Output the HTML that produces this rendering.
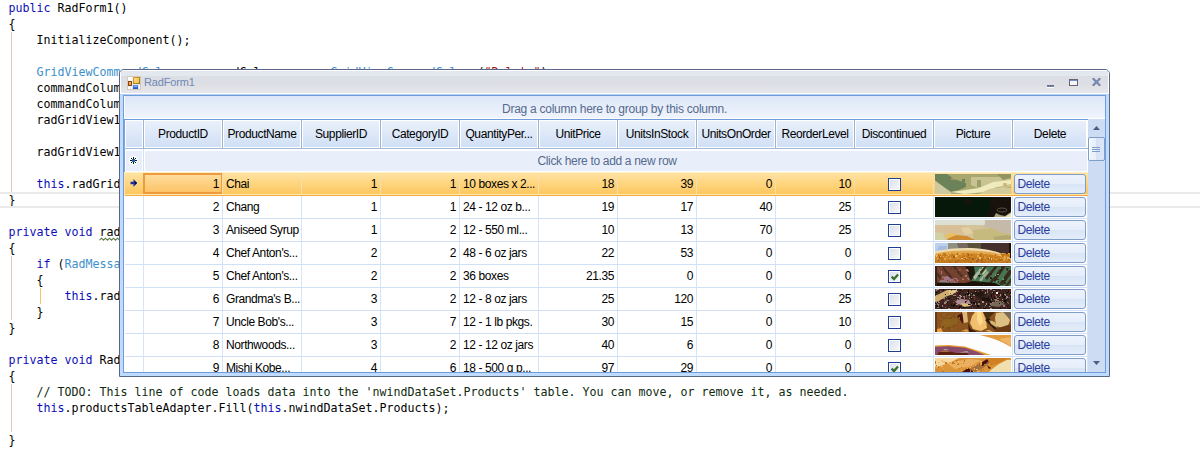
<!DOCTYPE html>
<html><head><meta charset="utf-8"><title>RadForm1</title>
<style>
html,body{margin:0;padding:0;background:#fff;}
body{width:1200px;height:463px;overflow:hidden;position:relative;font-family:"Liberation Sans",sans-serif;font-size:12px;}
#code{position:absolute;left:8.6px;top:0;font-family:"DejaVu Sans Mono","Liberation Mono",monospace;font-size:11.63px;line-height:16px;color:#000;white-space:pre;margin:0;}
#code .k{color:#0d0db8;} #code .t{color:#3d8fcb;} #code .c{color:#0f2a0f;} #code .s{color:#a31515;}
#code .sq{}
.guide{position:absolute;width:1px;background:#dccabe;}
.curline{position:absolute;left:0;top:192px;width:1200px;height:12px;border-top:2px solid #eaeaea;border-bottom:2px solid #eaeaea;}
#win{position:absolute;left:119px;top:69px;width:991px;height:308px;box-sizing:border-box;border:1px solid #5b6788;border-radius:5px 5px 0 0;background:#bfdbff;overflow:hidden;}
#win div,#win span,#win svg{position:absolute;box-sizing:border-box;}
#title{left:0;top:0;width:989px;height:24px;background:linear-gradient(#fff 0,#fff 1px,#e3e8ee 1px,#e3e8ee 6px,#dbdee5 6px,#dddfe5 14px,#e5e7eb 23px,#fff 23px);border-left:1px solid #fff;border-right:1px solid #fff;}
#title .txt{left:23px;top:6px;font-size:11px;color:#7088b4;white-space:pre;letter-spacing:-0.15px;}
.lbl{white-space:pre;letter-spacing:-0.4px;line-height:14px;height:14px;color:#000;}
</style></head><body>
<pre id="code"><span class="k">public</span> RadForm1()
{
    InitializeComponent();

    <span class="t">GridViewCommandColumn</span> commandColumn = <span class="k">new</span> <span class="t">GridViewCommandColumn</span>(<span class="s">"Delete"</span>);
    commandColumn.Name = <span class="s">"Delete"</span>;
    commandColumn.UseDefaultText = <span class="k">true</span>;
    radGridView1.Columns.Add(commandColumn);

    radGridView1.CommandCellClick += radGridView1_CommandCellClick;

    <span class="k">this</span>.radGridView1.UserDeletingRow += radGridView1_UserDeletingRow;
}

<span class="k">private</span> <span class="k">void</span> <span class="sq">radGridView1_CommandCellClick</span>(<span class="k">object</span> sender, <span class="t">EventArgs</span> e)
{
    <span class="k">if</span> (<span class="t">RadMessageBox</span>.Show(<span class="s">"Are you sure?"</span>) == <span class="t">DialogResult</span>.OK)
    {
        <span class="k">this</span>.radGridView1.Rows.Remove(row);
    }
}

<span class="k">private</span> <span class="k">void</span> RadForm1_Load(<span class="k">object</span> sender, <span class="t">EventArgs</span> e)
{
    <span class="c">// TODO: This line of code loads data into the 'nwindDataSet.Products' table. You can move, or remove it, as needed.</span>
    <span class="k">this</span>.productsTableAdapter.Fill(<span class="k">this</span>.nwindDataSet.Products);

}
</pre>
<div class="guide" style="left:11px;top:32px;height:160px"></div>
<div class="guide" style="left:11px;top:256px;height:64px"></div>
<div class="guide" style="left:40px;top:288px;height:16px;background:#f2c468"></div>
<div class="guide" style="left:11px;top:384px;height:48px"></div>
<svg style="position:absolute;left:99px;top:236px" width="24" height="6" viewBox="0 0 24 6"><path d="M0.500 4.200l2-2 2 2 2-2 2 2 2-2 2 2 2-2 2 2 2-2 2 2 2-2" fill="none" stroke="#5f7848" stroke-width="1.100"/></svg>
<div class="curline"></div>
<div id="win">
<div id="title"><span class="txt">RadForm1</span></div>

<div style="left:927px;top:15px;width:7px;height:2px;background:linear-gradient(#6b6470,#6f8fc6);"></div>
<div style="left:927px;top:17px;width:7px;height:1px;background:#fff;"></div>
<div style="left:949px;top:9px;width:9px;height:7px;border:1px solid #6b6470;background:linear-gradient(#6f8fc6 0,#6f8fc6 1px,#f4f6fa 1px);"></div>
<svg style="left:972px;top:8px" width="9" height="8" viewBox="0 0 9 8"><path d="M0.8 0.3L8.2 7.7M8.2 0.3L0.8 7.7" stroke="#7a6a6a" stroke-width="1.9"/><path d="M1.4 0.9L7.6 7.1M7.6 0.9L1.4 7.1" stroke="#6f8ec4" stroke-width="1.5"/></svg>
<svg style="left:7px;top:6px" width="14" height="14" viewBox="0 0 14 14">
<defs><linearGradient id="ig1" x1="0" y1="0" x2="1" y2="1"><stop offset="0" stop-color="#e09a28"/><stop offset="1" stop-color="#8a7a14"/></linearGradient>
<linearGradient id="ig2" x1="0" y1="0" x2="0" y2="1"><stop offset="0" stop-color="#5a9af4"/><stop offset="1" stop-color="#1a50c4"/></linearGradient>
<linearGradient id="ig3" x1="0" y1="0" x2="1" y2="1"><stop offset="0" stop-color="#fde08c"/><stop offset="1" stop-color="#f6b848"/></linearGradient></defs>
<rect x="0.5" y="0.5" width="13" height="13" fill="#e6e6ea" stroke="#d6c8ba"/>
<rect x="1" y="1" width="4.500" height="3.500" fill="#fbfbfd"/><rect x="1" y="10.500" width="2" height="2.500" fill="#fbfbfd"/><rect x="3.800" y="10.500" width="1.200" height="2.500" fill="#fbfbfd"/><rect x="12" y="9" width="1" height="4" fill="#fbfbfd"/>
<rect x="1.500" y="5.500" width="3" height="4" fill="#e8983c" stroke="#8a4810"/><rect x="2.600" y="6.300" width="1" height="1.600" fill="#f8c888"/>
<rect x="6.500" y="1.500" width="6" height="6" fill="url(#ig3)" stroke="url(#ig1)"/>
<rect x="6" y="9" width="5" height="4" fill="url(#ig2)"/><path d="M7 10.800l1-.8 1 .5 1-.3v.8h-3z" fill="#a8d0fa"/>
</svg>

<div style="left:0px;top:24px;width:989px;height:1px;background:#b5d0f4;"></div>
<div style="left:3px;top:25px;width:983px;height:278px;background:#fff;border:1px solid #6f9dd9;"></div>
<div style="left:4px;top:26px;width:981px;height:23px;background:linear-gradient(#dce7f8,#f0f4fc);border-left:1px solid #fff;border-bottom:1px solid #fff;"></div>
<span class="lbl" style="left:4px;top:32px;width:981px;text-align:center;color:#566a8f;letter-spacing:-0.26px;">Drag a column here to group by this column.</span>
<div style="left:4px;top:49px;width:964px;height:1px;background:#6f9dd9;"></div>
<div style="left:4px;top:50px;width:964px;height:28px;background:#fff;"></div>
<div style="left:4px;top:50px;width:1px;height:28px;background:#7fa4d8;"></div>
<div style="left:5px;top:50px;width:18px;height:28px;background:linear-gradient(#e9f0fa,#d1e0f6);border:1px solid #fff;"></div>
<div style="left:23px;top:50px;width:1px;height:28px;background:#9cb4d4;"></div>
<div style="left:24px;top:50px;width:78px;height:28px;background:linear-gradient(#e9f0fa,#d1e0f6);border:1px solid #fff;"></div>
<span class="lbl" style="left:24px;top:57px;width:78px;text-align:center;">ProductID</span>
<div style="left:102px;top:50px;width:1px;height:28px;background:#9cb4d4;"></div>
<div style="left:103px;top:50px;width:78px;height:28px;background:linear-gradient(#e9f0fa,#d1e0f6);border:1px solid #fff;"></div>
<span class="lbl" style="left:103px;top:57px;width:78px;text-align:center;">ProductName</span>
<div style="left:181px;top:50px;width:1px;height:28px;background:#9cb4d4;"></div>
<div style="left:182px;top:50px;width:78px;height:28px;background:linear-gradient(#e9f0fa,#d1e0f6);border:1px solid #fff;"></div>
<span class="lbl" style="left:182px;top:57px;width:78px;text-align:center;">SupplierID</span>
<div style="left:260px;top:50px;width:1px;height:28px;background:#9cb4d4;"></div>
<div style="left:261px;top:50px;width:78px;height:28px;background:linear-gradient(#e9f0fa,#d1e0f6);border:1px solid #fff;"></div>
<span class="lbl" style="left:261px;top:57px;width:78px;text-align:center;">CategoryID</span>
<div style="left:339px;top:50px;width:1px;height:28px;background:#9cb4d4;"></div>
<div style="left:340px;top:50px;width:78px;height:28px;background:linear-gradient(#e9f0fa,#d1e0f6);border:1px solid #fff;"></div>
<span class="lbl" style="left:340px;top:57px;width:78px;text-align:center;">QuantityPer...</span>
<div style="left:418px;top:50px;width:1px;height:28px;background:#9cb4d4;"></div>
<div style="left:419px;top:50px;width:78px;height:28px;background:linear-gradient(#e9f0fa,#d1e0f6);border:1px solid #fff;"></div>
<span class="lbl" style="left:419px;top:57px;width:78px;text-align:center;">UnitPrice</span>
<div style="left:497px;top:50px;width:1px;height:28px;background:#9cb4d4;"></div>
<div style="left:498px;top:50px;width:78px;height:28px;background:linear-gradient(#e9f0fa,#d1e0f6);border:1px solid #fff;"></div>
<span class="lbl" style="left:498px;top:57px;width:78px;text-align:center;">UnitsInStock</span>
<div style="left:576px;top:50px;width:1px;height:28px;background:#9cb4d4;"></div>
<div style="left:577px;top:50px;width:78px;height:28px;background:linear-gradient(#e9f0fa,#d1e0f6);border:1px solid #fff;"></div>
<span class="lbl" style="left:577px;top:57px;width:78px;text-align:center;">UnitsOnOrder</span>
<div style="left:655px;top:50px;width:1px;height:28px;background:#9cb4d4;"></div>
<div style="left:656px;top:50px;width:78px;height:28px;background:linear-gradient(#e9f0fa,#d1e0f6);border:1px solid #fff;"></div>
<span class="lbl" style="left:656px;top:57px;width:78px;text-align:center;">ReorderLevel</span>
<div style="left:734px;top:50px;width:1px;height:28px;background:#9cb4d4;"></div>
<div style="left:735px;top:50px;width:78px;height:28px;background:linear-gradient(#e9f0fa,#d1e0f6);border:1px solid #fff;"></div>
<span class="lbl" style="left:735px;top:57px;width:78px;text-align:center;">Discontinued</span>
<div style="left:813px;top:50px;width:1px;height:28px;background:#9cb4d4;"></div>
<div style="left:814px;top:50px;width:78px;height:28px;background:linear-gradient(#e9f0fa,#d1e0f6);border:1px solid #fff;"></div>
<span class="lbl" style="left:814px;top:57px;width:78px;text-align:center;">Picture</span>
<div style="left:892px;top:50px;width:1px;height:28px;background:#9cb4d4;"></div>
<div style="left:893px;top:50px;width:74px;height:28px;background:linear-gradient(#e9f0fa,#d1e0f6);border:1px solid #fff;"></div>
<span class="lbl" style="left:893px;top:57px;width:74px;text-align:center;">Delete</span>
<div style="left:4px;top:78px;width:964px;height:1px;background:#a3b9d8;"></div>
<div style="left:4px;top:79px;width:964px;height:23px;background:#fff;"></div>
<div style="left:4px;top:79px;width:1px;height:23px;background:#7fa4d8;"></div>
<div style="left:6px;top:81px;width:16px;height:20px;background:#e9effa;"></div>
<div style="left:23px;top:79px;width:1px;height:22px;background:#d3e1f5;"></div>
<div style="left:25px;top:81px;width:942px;height:20px;background:#e9effa;"></div>
<span class="lbl" style="left:387px;top:84px;width:200px;text-align:center;color:#566a8f;letter-spacing:-0.33px;">Click here to add a new row</span>
<svg style="left:8px;top:85px" width="11" height="11" viewBox="-2 -2 11 11"><circle cx="3.5" cy="3.5" r="4.6" fill="#fff" opacity="0.8"/><g shape-rendering="crispEdges"><path d="M3 0h1v2h-1zM3 5h1v2h-1zM0 3h2v1h-2zM5 3h2v1h-2zM1 1h1v1h-1zM5 1h1v1h-1zM1 5h1v1h-1zM5 5h1v1h-1z" fill="#0a1a10"/><rect x="2" y="2" width="3" height="3" fill="#1a62b4"/></g></svg>
<div style="left:4px;top:102px;width:964px;height:1px;background:#d0e1f7;"></div>
<div style="left:4px;top:103px;width:964px;height:21px;background:linear-gradient(#ffe3a3,#fed57f 50%,#fcc75f);"></div>
<div style="left:4px;top:102px;width:964px;height:1px;background:#fff0c4;"></div>
<div style="left:4px;top:124px;width:964px;height:1px;background:#ffe9a6;"></div>
<div style="left:4px;top:125px;width:964px;height:1px;background:#f5a742;"></div>
<div style="left:23px;top:103px;width:80px;height:21px;border:2px solid #ef9a3e;background:linear-gradient(#fedc9c,#fcc468);"></div>
<div style="left:102px;top:103px;width:1px;height:21px;background:#f7dcae;"></div>
<div style="left:181px;top:103px;width:1px;height:21px;background:#f7dcae;"></div>
<div style="left:260px;top:103px;width:1px;height:21px;background:#f7dcae;"></div>
<div style="left:339px;top:103px;width:1px;height:21px;background:#f7dcae;"></div>
<div style="left:418px;top:103px;width:1px;height:21px;background:#f7dcae;"></div>
<div style="left:497px;top:103px;width:1px;height:21px;background:#f7dcae;"></div>
<div style="left:576px;top:103px;width:1px;height:21px;background:#f7dcae;"></div>
<div style="left:655px;top:103px;width:1px;height:21px;background:#f7dcae;"></div>
<div style="left:734px;top:103px;width:1px;height:21px;background:#f7dcae;"></div>
<div style="left:813px;top:103px;width:1px;height:21px;background:#f7dcae;"></div>
<div style="left:892px;top:103px;width:1px;height:21px;background:#f7dcae;"></div>
<svg style="left:10px;top:108px" width="8" height="10" viewBox="0 0 8 10"><path d="M0.5 3.7h3V1l3.7 4L3.5 9V6.3h-3z" fill="#1c2fa0"/><path d="M5.2 3.4l1.9 1.6-1.9 1.6z" fill="#000"/></svg>
<div style="left:4px;top:103px;width:1px;height:23px;background:#fde3ad;"></div>
<span class="lbl" style="left:24px;top:107px;width:75px;text-align:right;">1</span>
<span class="lbl" style="left:106px;top:107px;width:75px;text-align:left;">Chai</span>
<span class="lbl" style="left:182px;top:107px;width:75px;text-align:right;">1</span>
<span class="lbl" style="left:261px;top:107px;width:75px;text-align:right;">1</span>
<span class="lbl" style="left:343px;top:107px;width:75px;text-align:left;">10 boxes x 2...</span>
<span class="lbl" style="left:419px;top:107px;width:75px;text-align:right;">18</span>
<span class="lbl" style="left:498px;top:107px;width:75px;text-align:right;">39</span>
<span class="lbl" style="left:577px;top:107px;width:75px;text-align:right;">0</span>
<span class="lbl" style="left:656px;top:107px;width:75px;text-align:right;">10</span>
<div style="left:768px;top:108px;width:13px;height:13px;border:1px solid #1f3f96;background:#fff;"><div style="left:1px;top:1px;width:9px;height:9px;background:linear-gradient(135deg,#dde1e9,#f6f7fa)"></div></div>
<svg style="left:815px;top:104px" width="76" height="20" viewBox="0 0 76 20" preserveAspectRatio="none"><rect width="76" height="20" fill="#a9a770"/><path d="M36 3h40v10L44 14l-8-3z" fill="#c8c390"/><path d="M0 0h12l7 5 12 4v4l-7 3-9 2L0 6z" fill="#6c8359"/><path d="M0 7l16 11v2H0z" fill="#cfc9a0"/><path d="M16 18l28-4 14-6 18-2v4l-14 3-12 5-20 2z" fill="#f0ebbf"/><path d="M44 20l10-5 14-2 8 1v6z" fill="#d4cc98"/><path d="M62 0h14v4l-8 2z" fill="#8f9462"/><path d="M42 6h4v7h-4z" fill="#9da066"/><path d="M16 4h4v2h-4z" fill="#b89c58" opacity=".7"/><path d="M68 9h4v3h-4z" fill="#c8aa60" opacity=".7"/><path d="M27 5h3v3h-3z" fill="#6c8359"/></svg>
<div style="left:894px;top:104px;width:72px;height:20px;border:1px solid #809cc8;border-radius:3px;background:linear-gradient(#edf3fc,#e6eefa 48%,#d9e5f6 52%,#e4edfa);"></div>
<span class="lbl" style="left:897.5px;top:107px;width:60px;color:#2a3d9c;">Delete</span>
<div style="left:4px;top:148px;width:964px;height:1px;background:#d0e1f7;"></div>
<div style="left:23px;top:126px;width:1px;height:22px;background:#d6e4f7;"></div>
<div style="left:102px;top:126px;width:1px;height:22px;background:#d6e4f7;"></div>
<div style="left:181px;top:126px;width:1px;height:22px;background:#d6e4f7;"></div>
<div style="left:260px;top:126px;width:1px;height:22px;background:#d6e4f7;"></div>
<div style="left:339px;top:126px;width:1px;height:22px;background:#d6e4f7;"></div>
<div style="left:418px;top:126px;width:1px;height:22px;background:#d6e4f7;"></div>
<div style="left:497px;top:126px;width:1px;height:22px;background:#d6e4f7;"></div>
<div style="left:576px;top:126px;width:1px;height:22px;background:#d6e4f7;"></div>
<div style="left:655px;top:126px;width:1px;height:22px;background:#d6e4f7;"></div>
<div style="left:734px;top:126px;width:1px;height:22px;background:#d6e4f7;"></div>
<div style="left:813px;top:126px;width:1px;height:22px;background:#d6e4f7;"></div>
<div style="left:892px;top:126px;width:1px;height:22px;background:#d6e4f7;"></div>
<div style="left:967px;top:126px;width:1px;height:22px;background:#d6e4f7;"></div>
<div style="left:4px;top:126px;width:1px;height:23px;background:#fff;"></div>
<span class="lbl" style="left:24px;top:130px;width:75px;text-align:right;">2</span>
<span class="lbl" style="left:106px;top:130px;width:75px;text-align:left;">Chang</span>
<span class="lbl" style="left:182px;top:130px;width:75px;text-align:right;">1</span>
<span class="lbl" style="left:261px;top:130px;width:75px;text-align:right;">1</span>
<span class="lbl" style="left:343px;top:130px;width:75px;text-align:left;">24 - 12 oz b...</span>
<span class="lbl" style="left:419px;top:130px;width:75px;text-align:right;">19</span>
<span class="lbl" style="left:498px;top:130px;width:75px;text-align:right;">17</span>
<span class="lbl" style="left:577px;top:130px;width:75px;text-align:right;">40</span>
<span class="lbl" style="left:656px;top:130px;width:75px;text-align:right;">25</span>
<div style="left:768px;top:131px;width:13px;height:13px;border:1px solid #1f3f96;background:#fff;"><div style="left:1px;top:1px;width:9px;height:9px;background:linear-gradient(135deg,#dde1e9,#f6f7fa)"></div></div>
<svg style="left:815px;top:127px" width="76" height="20" viewBox="0 0 76 20" preserveAspectRatio="none"><rect width="76" height="20" fill="#05180a"/><path d="M56 0h20v20H50l4-6z" fill="#17130c"/><path d="M28 2h8v6h-6z" fill="#15130b"/><ellipse cx="67" cy="13" rx="5" ry="2" fill="none" stroke="#5c4c42" stroke-width="1"/><path d="M59 20l2-4 4 2 5 1 6-4v5z" fill="#a89c78"/><path d="M70 20l6-4v4z" fill="#e6dfb4"/></svg>
<div style="left:894px;top:127px;width:72px;height:20px;border:1px solid #809cc8;border-radius:3px;background:linear-gradient(#edf3fc,#e6eefa 48%,#d9e5f6 52%,#e4edfa);"></div>
<span class="lbl" style="left:897.5px;top:130px;width:60px;color:#2a3d9c;">Delete</span>
<div style="left:4px;top:171px;width:964px;height:1px;background:#d0e1f7;"></div>
<div style="left:23px;top:149px;width:1px;height:22px;background:#d6e4f7;"></div>
<div style="left:102px;top:149px;width:1px;height:22px;background:#d6e4f7;"></div>
<div style="left:181px;top:149px;width:1px;height:22px;background:#d6e4f7;"></div>
<div style="left:260px;top:149px;width:1px;height:22px;background:#d6e4f7;"></div>
<div style="left:339px;top:149px;width:1px;height:22px;background:#d6e4f7;"></div>
<div style="left:418px;top:149px;width:1px;height:22px;background:#d6e4f7;"></div>
<div style="left:497px;top:149px;width:1px;height:22px;background:#d6e4f7;"></div>
<div style="left:576px;top:149px;width:1px;height:22px;background:#d6e4f7;"></div>
<div style="left:655px;top:149px;width:1px;height:22px;background:#d6e4f7;"></div>
<div style="left:734px;top:149px;width:1px;height:22px;background:#d6e4f7;"></div>
<div style="left:813px;top:149px;width:1px;height:22px;background:#d6e4f7;"></div>
<div style="left:892px;top:149px;width:1px;height:22px;background:#d6e4f7;"></div>
<div style="left:967px;top:149px;width:1px;height:22px;background:#d6e4f7;"></div>
<div style="left:4px;top:149px;width:1px;height:23px;background:#fff;"></div>
<span class="lbl" style="left:24px;top:153px;width:75px;text-align:right;">3</span>
<span class="lbl" style="left:106px;top:153px;width:75px;text-align:left;">Aniseed Syrup</span>
<span class="lbl" style="left:182px;top:153px;width:75px;text-align:right;">1</span>
<span class="lbl" style="left:261px;top:153px;width:75px;text-align:right;">2</span>
<span class="lbl" style="left:343px;top:153px;width:75px;text-align:left;">12 - 550 ml...</span>
<span class="lbl" style="left:419px;top:153px;width:75px;text-align:right;">10</span>
<span class="lbl" style="left:498px;top:153px;width:75px;text-align:right;">13</span>
<span class="lbl" style="left:577px;top:153px;width:75px;text-align:right;">70</span>
<span class="lbl" style="left:656px;top:153px;width:75px;text-align:right;">25</span>
<div style="left:768px;top:154px;width:13px;height:13px;border:1px solid #1f3f96;background:#fff;"><div style="left:1px;top:1px;width:9px;height:9px;background:linear-gradient(135deg,#dde1e9,#f6f7fa)"></div></div>
<svg style="left:815px;top:150px" width="76" height="20" viewBox="0 0 76 20" preserveAspectRatio="none"><rect width="76" height="20" fill="#d4c49a"/><rect width="76" height="5" fill="#dcdfd3"/><path d="M50 0h26v14l-8-1-12-5-8-1 2-3z" fill="#c5b9aa"/><path d="M38 10l18-2 12 5 8 1v6H38z" fill="#c6ba7e"/><path d="M0 6l24-1 10 2 4 4-6 4-20-2-12 1z" fill="#d9bf98"/><path d="M0 12l8 1 2 7H0z" fill="#cfd0a4"/><path d="M26 8l8-1 4 6-8 2z" fill="#e3cfa2"/><path d="M12 20l2-3 6-2 12 1 8 4z" fill="#cf8a34"/><path d="M8 16l8-3 8 1-10 4z" fill="#e8c060"/><path d="M58 17l14-2 4 1v3l-16 1z" fill="#b0a870"/></svg>
<div style="left:894px;top:150px;width:72px;height:20px;border:1px solid #809cc8;border-radius:3px;background:linear-gradient(#edf3fc,#e6eefa 48%,#d9e5f6 52%,#e4edfa);"></div>
<span class="lbl" style="left:897.5px;top:153px;width:60px;color:#2a3d9c;">Delete</span>
<div style="left:4px;top:194px;width:964px;height:1px;background:#d0e1f7;"></div>
<div style="left:23px;top:172px;width:1px;height:22px;background:#d6e4f7;"></div>
<div style="left:102px;top:172px;width:1px;height:22px;background:#d6e4f7;"></div>
<div style="left:181px;top:172px;width:1px;height:22px;background:#d6e4f7;"></div>
<div style="left:260px;top:172px;width:1px;height:22px;background:#d6e4f7;"></div>
<div style="left:339px;top:172px;width:1px;height:22px;background:#d6e4f7;"></div>
<div style="left:418px;top:172px;width:1px;height:22px;background:#d6e4f7;"></div>
<div style="left:497px;top:172px;width:1px;height:22px;background:#d6e4f7;"></div>
<div style="left:576px;top:172px;width:1px;height:22px;background:#d6e4f7;"></div>
<div style="left:655px;top:172px;width:1px;height:22px;background:#d6e4f7;"></div>
<div style="left:734px;top:172px;width:1px;height:22px;background:#d6e4f7;"></div>
<div style="left:813px;top:172px;width:1px;height:22px;background:#d6e4f7;"></div>
<div style="left:892px;top:172px;width:1px;height:22px;background:#d6e4f7;"></div>
<div style="left:967px;top:172px;width:1px;height:22px;background:#d6e4f7;"></div>
<div style="left:4px;top:172px;width:1px;height:23px;background:#fff;"></div>
<span class="lbl" style="left:24px;top:176px;width:75px;text-align:right;">4</span>
<span class="lbl" style="left:106px;top:176px;width:75px;text-align:left;">Chef Anton&#x27;s...</span>
<span class="lbl" style="left:182px;top:176px;width:75px;text-align:right;">2</span>
<span class="lbl" style="left:261px;top:176px;width:75px;text-align:right;">2</span>
<span class="lbl" style="left:343px;top:176px;width:75px;text-align:left;">48 - 6 oz jars</span>
<span class="lbl" style="left:419px;top:176px;width:75px;text-align:right;">22</span>
<span class="lbl" style="left:498px;top:176px;width:75px;text-align:right;">53</span>
<span class="lbl" style="left:577px;top:176px;width:75px;text-align:right;">0</span>
<span class="lbl" style="left:656px;top:176px;width:75px;text-align:right;">0</span>
<div style="left:768px;top:177px;width:13px;height:13px;border:1px solid #1f3f96;background:#fff;"><div style="left:1px;top:1px;width:9px;height:9px;background:linear-gradient(135deg,#dde1e9,#f6f7fa)"></div></div>
<svg style="left:815px;top:173px" width="76" height="20" viewBox="0 0 76 20" preserveAspectRatio="none"><rect width="76" height="20" fill="#cd8320"/><path d="M0 0h14v8L0 10z" fill="#bcd0ee"/><path d="M4 3h8v4H2z" fill="#a8bce0"/><path d="M13 0h11v7l-11 1z" fill="#8d917e"/><path d="M22 0h12v6l-10 1z" fill="#76685e"/><path d="M32 0h15v7l-13-1z" fill="#5a5238"/><path d="M46 0h30v16l-8-5-10-3-12-1z" fill="#46302c"/><path d="M74 0h2v18l-2-4z" fill="#1a0f08"/><path d="M0 8.500c10-2.500 20-3.500 32-3.500s24 1.500 34 5.500l10 5v2l-10-4c-10-3.500-22-4-34-4s-22 1-32 4z" fill="#efdcae"/><path d="M0 11c10-3 20-3.500 32-3.500s24 1 34 4l10 4.500v1.500l-10-3.500c-10-3-22-3.500-34-3.500s-22 1-32 3.500z" fill="#e2a850"/><rect x="13" y="16" width="1" height="2" fill="#c07a1c"/><rect x="8" y="10" width="1" height="1" fill="#f0c070"/><rect x="28" y="18" width="2" height="1" fill="#b8701c"/><rect x="22" y="11" width="2" height="2" fill="#e8a848"/><rect x="33" y="14" width="1" height="1" fill="#a05a28"/><rect x="37" y="15" width="1" height="2" fill="#b86a18"/><rect x="64" y="13" width="2" height="2" fill="#c87818"/><rect x="35" y="11" width="1" height="2" fill="#b8701c"/><rect x="37" y="19" width="2" height="1" fill="#e8a848"/><rect x="54" y="14" width="1" height="2" fill="#f0c070"/><rect x="29" y="14" width="2" height="1" fill="#e8a848"/><rect x="5" y="17" width="1" height="1" fill="#e8a848"/><rect x="18" y="13" width="2" height="2" fill="#b86a18"/><rect x="56" y="14" width="2" height="1" fill="#c87818"/><rect x="41" y="18" width="2" height="2" fill="#a05a28"/><rect x="7" y="13" width="2" height="1" fill="#e8a848"/><rect x="42" y="12" width="1" height="1" fill="#e8a848"/><rect x="5" y="15" width="2" height="1" fill="#b86a18"/><rect x="2" y="15" width="2" height="2" fill="#e8a848"/><rect x="52" y="19" width="2" height="1" fill="#b86a18"/><rect x="56" y="14" width="2" height="1" fill="#c87818"/><rect x="20" y="15" width="2" height="2" fill="#d89030"/><rect x="58" y="12" width="2" height="1" fill="#d08828"/><rect x="73" y="11" width="2" height="2" fill="#c07a1c"/><rect x="26" y="11" width="1" height="2" fill="#d89030"/><rect x="21" y="19" width="1" height="1" fill="#c87818"/><rect x="74" y="13" width="1" height="2" fill="#d08828"/><rect x="67" y="14" width="1" height="1" fill="#f0c070"/><rect x="25" y="13" width="1" height="2" fill="#c07a1c"/><rect x="4" y="13" width="2" height="2" fill="#f0c070"/><rect x="54" y="13" width="2" height="1" fill="#c07a1c"/><rect x="4" y="14" width="1" height="1" fill="#e8a848"/><rect x="29" y="16" width="1" height="1" fill="#e8a848"/><rect x="6" y="15" width="1" height="2" fill="#b86a18"/><rect x="63" y="16" width="2" height="1" fill="#b86a18"/><rect x="73" y="12" width="2" height="1" fill="#d08828"/><rect x="40" y="16" width="2" height="2" fill="#b8701c"/><rect x="43" y="16" width="1" height="2" fill="#c07a1c"/><rect x="24" y="10" width="1" height="2" fill="#f0c070"/><rect x="7" y="12" width="1" height="2" fill="#c07a1c"/><rect x="49" y="13" width="2" height="2" fill="#d89030"/><rect x="1" y="19" width="1" height="1" fill="#e8a848"/><rect x="48" y="13" width="1" height="2" fill="#b8701c"/><rect x="20" y="19" width="1" height="1" fill="#d08828"/><rect x="3" y="11" width="2" height="2" fill="#d89030"/><rect x="71" y="14" width="1" height="2" fill="#c87818"/><rect x="10" y="18" width="1" height="2" fill="#d89030"/><rect x="9" y="11" width="2" height="2" fill="#b8701c"/><rect x="26" y="14" width="2" height="2" fill="#f0c070"/><rect x="51" y="11" width="1" height="2" fill="#b86a18"/><rect x="65" y="16" width="1" height="2" fill="#f0c070"/><rect x="25" y="14" width="2" height="1" fill="#c07a1c"/><rect x="71" y="12" width="2" height="1" fill="#d08828"/><rect x="19" y="15" width="1" height="1" fill="#c07a1c"/><rect x="69" y="10" width="2" height="2" fill="#c87818"/><rect x="15" y="18" width="1" height="2" fill="#b86a18"/><rect x="67" y="11" width="2" height="2" fill="#b8701c"/><rect x="37" y="15" width="1" height="2" fill="#a05a28"/><rect x="6" y="19" width="1" height="1" fill="#d08828"/><rect x="64" y="17" width="2" height="2" fill="#c07a1c"/><rect x="32" y="19" width="2" height="1" fill="#d08828"/><rect x="55" y="11" width="2" height="1" fill="#c87818"/><rect x="47" y="13" width="1" height="2" fill="#d08828"/><rect x="51" y="12" width="1" height="1" fill="#d08828"/><rect x="22" y="14" width="2" height="2" fill="#d89030"/><rect x="45" y="11" width="1" height="1" fill="#c87818"/><rect x="73" y="11" width="1" height="2" fill="#b86a18"/><rect x="28" y="14" width="1" height="2" fill="#f0c070"/><rect x="28" y="14" width="1" height="2" fill="#d08828"/><rect x="68" y="18" width="1" height="2" fill="#c07a1c"/><rect x="40" y="14" width="2" height="2" fill="#c07a1c"/><rect x="32" y="12" width="2" height="1" fill="#b8701c"/><rect x="51" y="16" width="2" height="2" fill="#d89030"/><rect x="58" y="15" width="1" height="1" fill="#e8a848"/><rect x="61" y="13" width="1" height="2" fill="#c07a1c"/><rect x="30" y="11" width="1" height="1" fill="#e8a848"/><rect x="20" y="16" width="1" height="1" fill="#b8701c"/><rect x="67" y="13" width="2" height="1" fill="#c87818"/><rect x="4" y="15" width="1" height="1" fill="#b86a18"/><rect x="7" y="14" width="1" height="2" fill="#c87818"/><rect x="16" y="11" width="1" height="2" fill="#b8701c"/><rect x="70" y="12" width="2" height="1" fill="#b8701c"/><rect x="27" y="14" width="2" height="1" fill="#c07a1c"/><rect x="21" y="12" width="1" height="2" fill="#e8a848"/><rect x="51" y="15" width="2" height="2" fill="#c87818"/><rect x="54" y="10" width="2" height="1" fill="#e8a848"/><rect x="19" y="11" width="1" height="2" fill="#c87818"/><rect x="29" y="13" width="1" height="1" fill="#b8701c"/><rect x="68" y="12" width="1" height="2" fill="#c07a1c"/><rect x="22" y="18" width="2" height="2" fill="#a05a28"/><rect x="45" y="14" width="1" height="2" fill="#f0c070"/><rect x="32" y="19" width="1" height="1" fill="#e8a848"/><rect x="10" y="13" width="2" height="2" fill="#d08828"/><rect x="41" y="18" width="1" height="1" fill="#c07a1c"/><rect x="22" y="10" width="2" height="1" fill="#c07a1c"/><rect x="25" y="11" width="1" height="1" fill="#d08828"/><rect x="14" y="18" width="1" height="2" fill="#b8701c"/><rect x="28" y="19" width="1" height="1" fill="#e8a848"/><rect x="1" y="17" width="1" height="1" fill="#c87818"/><rect x="31" y="15" width="1" height="2" fill="#e8a848"/><rect x="4" y="12" width="2" height="2" fill="#f0c070"/><rect x="65" y="18" width="2" height="1" fill="#e8a848"/><rect x="55" y="15" width="2" height="1" fill="#c87818"/><rect x="61" y="16" width="1" height="1" fill="#e8a848"/><rect x="52" y="15" width="2" height="2" fill="#a05a28"/><rect x="65" y="11" width="2" height="2" fill="#d89030"/><rect x="36" y="12" width="2" height="2" fill="#d08828"/><rect x="11" y="13" width="1" height="1" fill="#e8a848"/><rect x="14" y="15" width="1" height="2" fill="#d89030"/><rect x="21" y="11" width="2" height="1" fill="#a05a28"/><rect x="40" y="14" width="1" height="1" fill="#c87818"/><rect x="3" y="12" width="1" height="1" fill="#a05a28"/><rect x="41" y="15" width="2" height="1" fill="#d08828"/><rect x="27" y="10" width="1" height="1" fill="#d89030"/><rect x="33" y="17" width="1" height="1" fill="#b86a18"/><rect x="50" y="17" width="1" height="1" fill="#b8701c"/><rect x="46" y="16" width="2" height="2" fill="#f0c070"/><rect x="23" y="12" width="1" height="1" fill="#d08828"/><rect x="30" y="15" width="1" height="2" fill="#a05a28"/><rect x="46" y="18" width="2" height="2" fill="#b86a18"/><rect x="44" y="12" width="1" height="1" fill="#b8701c"/><rect x="3" y="11" width="1" height="1" fill="#a05a28"/><rect x="69" y="17" width="2" height="2" fill="#d89030"/><rect x="20" y="12" width="2" height="2" fill="#f0c070"/><rect x="45" y="10" width="2" height="2" fill="#c07a1c"/><rect x="3" y="16" width="1" height="2" fill="#a05a28"/><rect x="37" y="18" width="1" height="2" fill="#d89030"/><rect x="20" y="18" width="1" height="2" fill="#d89030"/><rect x="42" y="19" width="1" height="1" fill="#d89030"/><rect x="55" y="13" width="1" height="2" fill="#c87818"/><rect x="23" y="19" width="1" height="1" fill="#e8a848"/><rect x="40" y="18" width="1" height="2" fill="#d08828"/><rect x="69" y="15" width="1" height="2" fill="#e8a848"/><rect x="69" y="12" width="2" height="1" fill="#d08828"/><rect x="60" y="11" width="1" height="2" fill="#b86a18"/><rect x="18" y="18" width="1" height="1" fill="#c87818"/><rect x="10" y="10" width="1" height="2" fill="#c87818"/><rect x="7" y="14" width="1" height="2" fill="#c07a1c"/><rect x="60" y="14" width="2" height="1" fill="#b8701c"/><rect x="36" y="16" width="1" height="1" fill="#d89030"/><rect x="67" y="15" width="1" height="2" fill="#b86a18"/><rect x="10" y="16" width="1" height="2" fill="#d89030"/><rect x="25" y="12" width="2" height="1" fill="#a05a28"/><rect x="1" y="10" width="1" height="1" fill="#e8a848"/><rect x="11" y="18" width="2" height="1" fill="#d08828"/><rect x="65" y="18" width="1" height="1" fill="#d89030"/><rect x="17" y="16" width="1" height="1" fill="#c87818"/><rect x="65" y="15" width="1" height="2" fill="#e8a848"/><rect x="74" y="19" width="1" height="1" fill="#b86a18"/><rect x="5" y="14" width="1" height="1" fill="#b8701c"/><rect x="45" y="12" width="2" height="2" fill="#b8701c"/><rect x="31" y="17" width="2" height="2" fill="#c87818"/><rect x="71" y="19" width="2" height="1" fill="#a05a28"/><rect x="42" y="12" width="2" height="2" fill="#e8a848"/><rect x="38" y="15" width="1" height="2" fill="#a05a28"/><rect x="34" y="15" width="2" height="2" fill="#c87818"/><rect x="29" y="15" width="2" height="1" fill="#a05a28"/><rect x="12" y="14" width="1" height="2" fill="#d89030"/><rect x="0" y="18" width="1" height="1" fill="#c87818"/><rect x="47" y="16" width="1" height="1" fill="#f0c070"/><rect x="55" y="14" width="1" height="2" fill="#b8701c"/><rect x="5" y="11" width="1" height="2" fill="#c87818"/><rect x="0" y="16" width="1" height="2" fill="#c87818"/><rect x="71" y="13" width="2" height="1" fill="#d08828"/><rect x="16" y="10" width="2" height="2" fill="#d08828"/><rect x="48" y="19" width="2" height="1" fill="#a05a28"/><rect x="73" y="16" width="2" height="2" fill="#b8701c"/><rect x="20" y="11" width="1" height="2" fill="#c07a1c"/><rect x="3" y="11" width="2" height="1" fill="#e8a848"/><rect x="16" y="17" width="1" height="1" fill="#c07a1c"/><rect x="40" y="16" width="2" height="2" fill="#e8a848"/><rect x="43" y="16" width="2" height="1" fill="#b8701c"/><rect x="55" y="15" width="1" height="2" fill="#a05a28"/><rect x="36" y="11" width="1" height="2" fill="#d08828"/><rect x="23" y="17" width="1" height="1" fill="#a05a28"/><rect x="56" y="16" width="2" height="2" fill="#b8701c"/><rect x="1" y="16" width="1" height="2" fill="#d08828"/><rect x="25" y="12" width="2" height="2" fill="#d08828"/><rect x="33" y="18" width="2" height="1" fill="#c07a1c"/><rect x="49" y="17" width="1" height="2" fill="#d08828"/><rect x="32" y="12" width="1" height="2" fill="#b8701c"/><rect x="58" y="19" width="1" height="1" fill="#e8a848"/><rect x="0" y="13" width="1" height="1" fill="#d08828"/><rect x="41" y="17" width="1" height="2" fill="#a05a28"/><rect x="8" y="10" width="2" height="1" fill="#c07a1c"/><rect x="28" y="17" width="1" height="1" fill="#b8701c"/><rect x="22" y="13" width="1" height="1" fill="#d89030"/><rect x="28" y="10" width="1" height="1" fill="#b8701c"/><rect x="44" y="14" width="2" height="2" fill="#f0c070"/><rect x="15" y="14" width="1" height="2" fill="#e8a848"/><rect x="43" y="10" width="1" height="1" fill="#f0c070"/><rect x="31" y="10" width="1" height="1" fill="#c07a1c"/><rect x="8" y="11" width="2" height="2" fill="#c87818"/><rect x="65" y="16" width="2" height="2" fill="#b86a18"/><rect x="4" y="12" width="1" height="1" fill="#c07a1c"/><rect x="46" y="16" width="2" height="2" fill="#a05a28"/><rect x="73" y="10" width="2" height="2" fill="#e8a848"/><rect x="36" y="11" width="2" height="2" fill="#c87818"/><rect x="49" y="18" width="1" height="1" fill="#c87818"/><rect x="71" y="11" width="1" height="1" fill="#b8701c"/><rect x="3" y="11" width="1" height="2" fill="#b8701c"/><rect x="67" y="10" width="2" height="1" fill="#e8a848"/><rect x="24" y="11" width="2" height="1" fill="#e8a848"/><rect x="67" y="14" width="2" height="2" fill="#d89030"/><rect x="46" y="12" width="1" height="2" fill="#c07a1c"/><rect x="62" y="13" width="2" height="1" fill="#c87818"/><rect x="4" y="13" width="1" height="2" fill="#a05a28"/><rect x="16" y="12" width="2" height="2" fill="#d08828"/><rect x="46" y="15" width="2" height="2" fill="#b86a18"/><rect x="34" y="14" width="2" height="2" fill="#c87818"/><rect x="56" y="18" width="1" height="2" fill="#c07a1c"/><rect x="34" y="15" width="2" height="1" fill="#b8701c"/><rect x="1" y="12" width="1" height="2" fill="#f0c070"/><rect x="61" y="12" width="1" height="2" fill="#d89030"/><rect x="31" y="16" width="2" height="1" fill="#b8701c"/><rect x="60" y="17" width="1" height="1" fill="#e8a848"/><rect x="42" y="16" width="2" height="2" fill="#a05a28"/><rect x="70" y="13" width="1" height="1" fill="#d89030"/><rect x="32" y="10" width="2" height="2" fill="#c87818"/><rect x="51" y="16" width="2" height="1" fill="#d08828"/><rect x="56" y="15" width="1" height="2" fill="#f0c070"/><rect x="16" y="12" width="1" height="2" fill="#c07a1c"/><rect x="21" y="17" width="2" height="2" fill="#b8701c"/><rect x="72" y="11" width="2" height="2" fill="#c87818"/><rect x="65" y="12" width="1" height="2" fill="#b86a18"/><rect x="35" y="19" width="2" height="1" fill="#a05a28"/><rect x="52" y="14" width="1" height="2" fill="#c07a1c"/><rect x="13" y="12" width="1" height="1" fill="#f0c070"/><rect x="9" y="15" width="2" height="2" fill="#e8a848"/><rect x="2" y="15" width="2" height="1" fill="#e8a848"/><rect x="49" y="15" width="2" height="2" fill="#d89030"/><rect x="33" y="11" width="1" height="2" fill="#a05a28"/><rect x="63" y="19" width="1" height="1" fill="#e8a848"/><rect x="49" y="16" width="2" height="1" fill="#c07a1c"/><rect x="60" y="18" width="2" height="1" fill="#c87818"/><rect x="35" y="11" width="2" height="2" fill="#c07a1c"/><rect x="68" y="16" width="1" height="2" fill="#e8a848"/><rect x="7" y="15" width="2" height="2" fill="#c07a1c"/><rect x="18" y="13" width="2" height="2" fill="#a05a28"/><rect x="33" y="16" width="2" height="1" fill="#c07a1c"/><rect x="64" y="12" width="2" height="2" fill="#f0c070"/><rect x="36" y="15" width="1" height="2" fill="#c87818"/><rect x="27" y="13" width="2" height="2" fill="#c07a1c"/><rect x="20" y="11" width="1" height="2" fill="#e8a848"/><rect x="40" y="16" width="1" height="1" fill="#d08828"/><rect x="10" y="19" width="2" height="1" fill="#b8701c"/><rect x="47" y="12" width="1" height="2" fill="#d08828"/><rect x="45" y="18" width="2" height="1" fill="#b8701c"/><rect x="56" y="18" width="1" height="2" fill="#c07a1c"/><rect x="40" y="16" width="1" height="1" fill="#c87818"/><rect x="73" y="12" width="2" height="2" fill="#c87818"/><rect x="24" y="16" width="1" height="2" fill="#c87818"/><rect x="20" y="18" width="1" height="2" fill="#a05a28"/><rect x="64" y="13" width="2" height="1" fill="#d08828"/><rect x="5" y="15" width="2" height="1" fill="#b8701c"/><rect x="56" y="11" width="2" height="1" fill="#e8a848"/><rect x="8" y="18" width="1" height="1" fill="#d08828"/><rect x="17" y="12" width="1" height="1" fill="#b86a18"/><rect x="21" y="10" width="1" height="2" fill="#d08828"/><rect x="59" y="17" width="2" height="2" fill="#c87818"/><path d="M0 17h60l16 1v2H0z" fill="#b87020" opacity="0.45"/></svg>
<div style="left:894px;top:173px;width:72px;height:20px;border:1px solid #809cc8;border-radius:3px;background:linear-gradient(#edf3fc,#e6eefa 48%,#d9e5f6 52%,#e4edfa);"></div>
<span class="lbl" style="left:897.5px;top:176px;width:60px;color:#2a3d9c;">Delete</span>
<div style="left:4px;top:217px;width:964px;height:1px;background:#d0e1f7;"></div>
<div style="left:23px;top:195px;width:1px;height:22px;background:#d6e4f7;"></div>
<div style="left:102px;top:195px;width:1px;height:22px;background:#d6e4f7;"></div>
<div style="left:181px;top:195px;width:1px;height:22px;background:#d6e4f7;"></div>
<div style="left:260px;top:195px;width:1px;height:22px;background:#d6e4f7;"></div>
<div style="left:339px;top:195px;width:1px;height:22px;background:#d6e4f7;"></div>
<div style="left:418px;top:195px;width:1px;height:22px;background:#d6e4f7;"></div>
<div style="left:497px;top:195px;width:1px;height:22px;background:#d6e4f7;"></div>
<div style="left:576px;top:195px;width:1px;height:22px;background:#d6e4f7;"></div>
<div style="left:655px;top:195px;width:1px;height:22px;background:#d6e4f7;"></div>
<div style="left:734px;top:195px;width:1px;height:22px;background:#d6e4f7;"></div>
<div style="left:813px;top:195px;width:1px;height:22px;background:#d6e4f7;"></div>
<div style="left:892px;top:195px;width:1px;height:22px;background:#d6e4f7;"></div>
<div style="left:967px;top:195px;width:1px;height:22px;background:#d6e4f7;"></div>
<div style="left:4px;top:195px;width:1px;height:23px;background:#fff;"></div>
<span class="lbl" style="left:24px;top:199px;width:75px;text-align:right;">5</span>
<span class="lbl" style="left:106px;top:199px;width:75px;text-align:left;">Chef Anton&#x27;s...</span>
<span class="lbl" style="left:182px;top:199px;width:75px;text-align:right;">2</span>
<span class="lbl" style="left:261px;top:199px;width:75px;text-align:right;">2</span>
<span class="lbl" style="left:343px;top:199px;width:75px;text-align:left;">36 boxes</span>
<span class="lbl" style="left:419px;top:199px;width:75px;text-align:right;">21.35</span>
<span class="lbl" style="left:498px;top:199px;width:75px;text-align:right;">0</span>
<span class="lbl" style="left:577px;top:199px;width:75px;text-align:right;">0</span>
<span class="lbl" style="left:656px;top:199px;width:75px;text-align:right;">0</span>
<div style="left:768px;top:200px;width:13px;height:13px;border:1px solid #1f3f96;background:#fff;"><div style="left:1px;top:1px;width:9px;height:9px;background:linear-gradient(135deg,#dde1e9,#f6f7fa)"></div><svg style="left:0;top:0" width="11" height="11" viewBox="0 0 11 11"><path d="M2.6 5.6l2.4 2.4 4-4.6" fill="none" stroke="#3b7030" stroke-width="2.3"/></svg></div>
<svg style="left:815px;top:196px" width="76" height="20" viewBox="0 0 76 20" preserveAspectRatio="none"><rect width="76" height="20" fill="#74422f"/><path d="M38 0h38v20H46l-10-5 4-8z" fill="#477552"/><path d="M30 0h9l1 8-4 7-3-7z" fill="#1e1a10"/><path d="M38 11l8-10h3l-9 13z" fill="#a9b9a2"/><path d="M44 14l8-9 2 1-8 10z" fill="#9fb09a"/><path d="M47 8l4-5 1 1-4 5z" fill="#d8d098"/><path d="M6 11l6-1 6 2 6 2-2 3H8l-3-2z" fill="#a07484"/><path d="M4 15l10 1 8 2H4z" fill="#8a8270"/><path d="M50 12l10-12h3L52 14zM57 14l10-14h4L60 16zM64 18l10-14h2v4l-8 11zM45 6l5-6h2l-6 8zM70 20l6-8v4l-3 4zM53 18l5-6 1 2-4 5z" fill="#3a2a1c"/><path d="M8 0l10 12-2 1L5 0zM20 0l8 10-2 1-9-11zM0 4l8 9-2 1-6-7z" fill="#4a2c22"/><path d="M0 16.500l30 .5 8-2 22 2 6 3H0z" fill="#1a1208"/><path d="M0 0h2v20H0z" fill="#3a2018"/><path d="M0 0h76v1H0z" fill="#3a2a1c" opacity=".6"/><rect x="27" y="12" width="2" height="2" fill="#94543a"/><rect x="17" y="11" width="1" height="2" fill="#8a4a34"/><rect x="25" y="8" width="1" height="1" fill="#5a3226"/><rect x="20" y="4" width="2" height="1" fill="#8a4a34"/><rect x="19" y="3" width="1" height="2" fill="#6a3a2c"/><rect x="10" y="10" width="1" height="1" fill="#94543a"/><rect x="6" y="1" width="2" height="1" fill="#8a4a34"/><rect x="12" y="14" width="1" height="1" fill="#5a3226"/><rect x="32" y="4" width="2" height="2" fill="#94543a"/><rect x="14" y="15" width="1" height="1" fill="#6a3a2c"/><rect x="13" y="7" width="2" height="1" fill="#5a3226"/><rect x="6" y="6" width="1" height="2" fill="#a87880"/><rect x="6" y="5" width="1" height="2" fill="#a87880"/><rect x="24" y="6" width="2" height="2" fill="#5a3226"/><rect x="24" y="3" width="2" height="2" fill="#8a4a34"/><rect x="32" y="12" width="2" height="1" fill="#a87880"/><rect x="19" y="13" width="2" height="1" fill="#6a3a2c"/><rect x="20" y="14" width="2" height="2" fill="#8a4a34"/><rect x="24" y="3" width="2" height="1" fill="#94543a"/><rect x="17" y="15" width="1" height="1" fill="#6a3a2c"/><rect x="30" y="9" width="2" height="2" fill="#a87880"/><rect x="20" y="12" width="2" height="1" fill="#a87880"/><rect x="15" y="2" width="2" height="1" fill="#5a3226"/><rect x="31" y="3" width="2" height="2" fill="#a87880"/><rect x="11" y="11" width="2" height="1" fill="#a87880"/><rect x="27" y="2" width="2" height="1" fill="#5a3226"/><rect x="7" y="12" width="2" height="2" fill="#8a4a34"/><rect x="4" y="4" width="1" height="2" fill="#94543a"/><rect x="16" y="11" width="2" height="2" fill="#6a3a2c"/><rect x="4" y="13" width="1" height="1" fill="#6a3a2c"/><rect x="6" y="12" width="2" height="1" fill="#94543a"/><rect x="8" y="3" width="1" height="2" fill="#6a3a2c"/><rect x="3" y="14" width="2" height="1" fill="#6a3a2c"/><rect x="16" y="15" width="2" height="1" fill="#94543a"/><rect x="33" y="12" width="1" height="2" fill="#a87880"/><rect x="11" y="8" width="2" height="2" fill="#6a3a2c"/><rect x="26" y="14" width="1" height="1" fill="#94543a"/><rect x="23" y="3" width="1" height="2" fill="#8a4a34"/><rect x="18" y="13" width="2" height="2" fill="#94543a"/><rect x="27" y="13" width="2" height="1" fill="#a87880"/><rect x="73" y="2" width="1" height="1" fill="#2f3a26"/><rect x="43" y="5" width="1" height="1" fill="#7aa07a"/><rect x="61" y="15" width="1" height="1" fill="#7aa07a"/><rect x="56" y="12" width="2" height="2" fill="#2f3a26"/><rect x="60" y="8" width="1" height="2" fill="#7aa07a"/><rect x="69" y="14" width="2" height="1" fill="#2a2418"/><rect x="63" y="15" width="1" height="2" fill="#3a2a1c"/><rect x="65" y="3" width="2" height="2" fill="#2a2418"/><rect x="48" y="18" width="1" height="1" fill="#2f3a26"/><rect x="73" y="16" width="1" height="2" fill="#2f3a26"/><rect x="65" y="2" width="1" height="1" fill="#5a9064"/><rect x="65" y="17" width="2" height="2" fill="#2f3a26"/><rect x="45" y="8" width="1" height="2" fill="#7aa07a"/><rect x="60" y="13" width="2" height="1" fill="#2a2418"/><rect x="44" y="9" width="2" height="2" fill="#2a2418"/><rect x="71" y="13" width="1" height="1" fill="#2a2418"/><rect x="45" y="10" width="1" height="2" fill="#5a9064"/><rect x="43" y="9" width="1" height="2" fill="#2f3a26"/><rect x="71" y="2" width="2" height="2" fill="#3a2a1c"/><rect x="45" y="15" width="1" height="2" fill="#2f3a26"/><rect x="45" y="1" width="2" height="2" fill="#5a9064"/><rect x="67" y="12" width="2" height="2" fill="#5a9064"/><rect x="59" y="1" width="2" height="2" fill="#2a2418"/><rect x="62" y="13" width="2" height="1" fill="#3a2a1c"/><rect x="56" y="8" width="1" height="1" fill="#2a2418"/><rect x="55" y="11" width="2" height="2" fill="#2a2418"/><rect x="62" y="8" width="2" height="1" fill="#7aa07a"/><rect x="72" y="4" width="1" height="1" fill="#3a2a1c"/><rect x="48" y="11" width="2" height="2" fill="#5a9064"/><rect x="69" y="16" width="2" height="2" fill="#3a2a1c"/></svg>
<div style="left:894px;top:196px;width:72px;height:20px;border:1px solid #809cc8;border-radius:3px;background:linear-gradient(#edf3fc,#e6eefa 48%,#d9e5f6 52%,#e4edfa);"></div>
<span class="lbl" style="left:897.5px;top:199px;width:60px;color:#2a3d9c;">Delete</span>
<div style="left:4px;top:240px;width:964px;height:1px;background:#d0e1f7;"></div>
<div style="left:23px;top:218px;width:1px;height:22px;background:#d6e4f7;"></div>
<div style="left:102px;top:218px;width:1px;height:22px;background:#d6e4f7;"></div>
<div style="left:181px;top:218px;width:1px;height:22px;background:#d6e4f7;"></div>
<div style="left:260px;top:218px;width:1px;height:22px;background:#d6e4f7;"></div>
<div style="left:339px;top:218px;width:1px;height:22px;background:#d6e4f7;"></div>
<div style="left:418px;top:218px;width:1px;height:22px;background:#d6e4f7;"></div>
<div style="left:497px;top:218px;width:1px;height:22px;background:#d6e4f7;"></div>
<div style="left:576px;top:218px;width:1px;height:22px;background:#d6e4f7;"></div>
<div style="left:655px;top:218px;width:1px;height:22px;background:#d6e4f7;"></div>
<div style="left:734px;top:218px;width:1px;height:22px;background:#d6e4f7;"></div>
<div style="left:813px;top:218px;width:1px;height:22px;background:#d6e4f7;"></div>
<div style="left:892px;top:218px;width:1px;height:22px;background:#d6e4f7;"></div>
<div style="left:967px;top:218px;width:1px;height:22px;background:#d6e4f7;"></div>
<div style="left:4px;top:218px;width:1px;height:23px;background:#fff;"></div>
<span class="lbl" style="left:24px;top:222px;width:75px;text-align:right;">6</span>
<span class="lbl" style="left:106px;top:222px;width:75px;text-align:left;">Grandma&#x27;s B...</span>
<span class="lbl" style="left:182px;top:222px;width:75px;text-align:right;">3</span>
<span class="lbl" style="left:261px;top:222px;width:75px;text-align:right;">2</span>
<span class="lbl" style="left:343px;top:222px;width:75px;text-align:left;">12 - 8 oz jars</span>
<span class="lbl" style="left:419px;top:222px;width:75px;text-align:right;">25</span>
<span class="lbl" style="left:498px;top:222px;width:75px;text-align:right;">120</span>
<span class="lbl" style="left:577px;top:222px;width:75px;text-align:right;">0</span>
<span class="lbl" style="left:656px;top:222px;width:75px;text-align:right;">25</span>
<div style="left:768px;top:223px;width:13px;height:13px;border:1px solid #1f3f96;background:#fff;"><div style="left:1px;top:1px;width:9px;height:9px;background:linear-gradient(135deg,#dde1e9,#f6f7fa)"></div></div>
<svg style="left:815px;top:219px" width="76" height="20" viewBox="0 0 76 20" preserveAspectRatio="none"><rect width="76" height="20" fill="#3a2420"/><rect x="33" y="1" width="1" height="2" fill="#1a1208"/><rect x="47" y="10" width="1" height="2" fill="#1a1208"/><rect x="25" y="13" width="2" height="2" fill="#a89888"/><rect x="72" y="17" width="1" height="1" fill="#141008"/><rect x="54" y="10" width="2" height="1" fill="#5a1a1c"/><rect x="32" y="14" width="2" height="2" fill="#141008"/><rect x="37" y="3" width="1" height="1" fill="#1a1208"/><rect x="62" y="6" width="1" height="2" fill="#a89888"/><rect x="31" y="13" width="1" height="2" fill="#0f0c06"/><rect x="11" y="16" width="2" height="1" fill="#5a4038"/><rect x="34" y="9" width="1" height="1" fill="#141008"/><rect x="61" y="7" width="1" height="2" fill="#8a7a68"/><rect x="24" y="5" width="1" height="1" fill="#1a1208"/><rect x="47" y="12" width="2" height="2" fill="#a89888"/><rect x="16" y="15" width="2" height="2" fill="#1a1208"/><rect x="50" y="3" width="1" height="2" fill="#9a8a78"/><rect x="57" y="14" width="1" height="1" fill="#6a2020"/><rect x="60" y="9" width="1" height="2" fill="#141008"/><rect x="24" y="8" width="2" height="1" fill="#9a8a78"/><rect x="2" y="0" width="2" height="1" fill="#a89888"/><rect x="75" y="11" width="1" height="2" fill="#4a2a28"/><rect x="42" y="16" width="2" height="2" fill="#0f0c06"/><rect x="62" y="8" width="2" height="2" fill="#3a2a20"/><rect x="62" y="4" width="2" height="2" fill="#141008"/><rect x="39" y="14" width="2" height="2" fill="#a07888"/><rect x="48" y="19" width="2" height="1" fill="#0f0c06"/><rect x="62" y="5" width="2" height="2" fill="#0f0c06"/><rect x="7" y="5" width="1" height="2" fill="#1a1208"/><rect x="46" y="15" width="1" height="2" fill="#3a2a20"/><rect x="19" y="8" width="1" height="1" fill="#3a2a20"/><rect x="67" y="15" width="1" height="2" fill="#5a1a1c"/><rect x="12" y="11" width="2" height="1" fill="#a07888"/><rect x="40" y="4" width="1" height="1" fill="#1a1208"/><rect x="5" y="15" width="1" height="1" fill="#9a8a78"/><rect x="70" y="4" width="1" height="1" fill="#3a2a20"/><rect x="33" y="14" width="1" height="1" fill="#9a8a78"/><rect x="24" y="14" width="1" height="1" fill="#9a8a78"/><rect x="71" y="8" width="2" height="2" fill="#9a8a78"/><rect x="46" y="9" width="1" height="2" fill="#a07888"/><rect x="64" y="8" width="1" height="1" fill="#0f0c06"/><rect x="55" y="14" width="2" height="2" fill="#a07888"/><rect x="31" y="19" width="1" height="1" fill="#5a4038"/><rect x="22" y="10" width="1" height="1" fill="#a07888"/><rect x="26" y="13" width="1" height="1" fill="#a07888"/><rect x="14" y="12" width="1" height="1" fill="#a89888"/><rect x="63" y="2" width="1" height="2" fill="#8a7a68"/><rect x="66" y="0" width="1" height="2" fill="#8a7a68"/><rect x="36" y="4" width="1" height="1" fill="#a89888"/><rect x="28" y="18" width="2" height="1" fill="#141008"/><rect x="20" y="10" width="1" height="2" fill="#4a2a28"/><rect x="24" y="10" width="1" height="2" fill="#6a2020"/><rect x="50" y="16" width="2" height="1" fill="#a89888"/><rect x="69" y="11" width="1" height="1" fill="#0f0c06"/><rect x="21" y="4" width="1" height="1" fill="#6a2020"/><rect x="1" y="1" width="1" height="1" fill="#9a8a78"/><rect x="69" y="3" width="1" height="1" fill="#5a4038"/><rect x="7" y="17" width="2" height="1" fill="#4a2a28"/><rect x="72" y="9" width="2" height="1" fill="#5a1a1c"/><rect x="73" y="1" width="2" height="1" fill="#8a7a68"/><rect x="14" y="5" width="2" height="1" fill="#1a1208"/><rect x="36" y="8" width="1" height="2" fill="#9a8a78"/><rect x="68" y="6" width="1" height="1" fill="#0f0c06"/><rect x="67" y="10" width="1" height="2" fill="#a89888"/><rect x="46" y="11" width="1" height="1" fill="#141008"/><rect x="3" y="11" width="1" height="1" fill="#141008"/><rect x="6" y="11" width="2" height="2" fill="#8a7a68"/><rect x="43" y="2" width="1" height="1" fill="#9a8a78"/><rect x="33" y="2" width="1" height="2" fill="#5a4038"/><rect x="16" y="4" width="2" height="1" fill="#6a2020"/><rect x="49" y="19" width="1" height="1" fill="#6a2020"/><rect x="32" y="4" width="2" height="2" fill="#0f0c06"/><rect x="57" y="3" width="1" height="1" fill="#8a7a68"/><rect x="65" y="5" width="1" height="1" fill="#5a1a1c"/><rect x="60" y="15" width="1" height="2" fill="#a89888"/><rect x="49" y="4" width="2" height="1" fill="#9a8a78"/><rect x="53" y="8" width="1" height="2" fill="#a07888"/><rect x="47" y="18" width="1" height="2" fill="#5a4038"/><rect x="0" y="9" width="2" height="1" fill="#8a7a68"/><rect x="29" y="2" width="1" height="2" fill="#4a2a28"/><rect x="16" y="4" width="2" height="2" fill="#a89888"/><rect x="46" y="10" width="1" height="2" fill="#141008"/><rect x="8" y="8" width="2" height="2" fill="#8a7a68"/><rect x="75" y="19" width="1" height="1" fill="#3a2a20"/><rect x="11" y="2" width="1" height="1" fill="#5a4038"/><rect x="44" y="10" width="1" height="1" fill="#8a7a68"/><rect x="23" y="7" width="1" height="1" fill="#5a4038"/><rect x="58" y="3" width="1" height="2" fill="#141008"/><rect x="25" y="18" width="1" height="2" fill="#a07888"/><rect x="33" y="2" width="1" height="2" fill="#0f0c06"/><rect x="3" y="15" width="1" height="1" fill="#5a4038"/><rect x="7" y="0" width="2" height="2" fill="#0f0c06"/><rect x="43" y="3" width="1" height="2" fill="#141008"/><rect x="18" y="11" width="2" height="1" fill="#5a4038"/><rect x="2" y="17" width="2" height="2" fill="#8a7a68"/><rect x="47" y="0" width="1" height="2" fill="#8a7a68"/><rect x="9" y="15" width="2" height="2" fill="#5a1a1c"/><rect x="69" y="5" width="2" height="1" fill="#9a8a78"/><rect x="69" y="11" width="2" height="2" fill="#0f0c06"/><rect x="71" y="1" width="2" height="2" fill="#a89888"/><rect x="67" y="15" width="1" height="1" fill="#a89888"/><rect x="4" y="10" width="2" height="1" fill="#1a1208"/><rect x="24" y="4" width="1" height="2" fill="#0f0c06"/><rect x="38" y="11" width="1" height="2" fill="#4a2a28"/><rect x="11" y="11" width="1" height="1" fill="#3a2a20"/><rect x="23" y="15" width="1" height="2" fill="#5a4038"/><rect x="49" y="17" width="1" height="2" fill="#3a2a20"/><rect x="11" y="13" width="2" height="1" fill="#1a1208"/><rect x="34" y="7" width="1" height="2" fill="#5a4038"/><rect x="64" y="16" width="1" height="2" fill="#0f0c06"/><rect x="38" y="13" width="2" height="2" fill="#141008"/><rect x="69" y="13" width="2" height="1" fill="#5a4038"/><rect x="7" y="16" width="1" height="2" fill="#a07888"/><rect x="14" y="1" width="1" height="1" fill="#9a8a78"/><rect x="22" y="8" width="2" height="1" fill="#a07888"/><rect x="34" y="9" width="1" height="1" fill="#a07888"/><rect x="9" y="3" width="2" height="2" fill="#0f0c06"/><rect x="32" y="9" width="2" height="2" fill="#4a2a28"/><rect x="65" y="17" width="1" height="1" fill="#6a2020"/><rect x="37" y="0" width="1" height="1" fill="#5a1a1c"/><rect x="71" y="3" width="2" height="1" fill="#1a1208"/><rect x="62" y="6" width="2" height="2" fill="#5a1a1c"/><rect x="17" y="4" width="2" height="1" fill="#5a1a1c"/><rect x="41" y="13" width="1" height="1" fill="#141008"/><rect x="57" y="10" width="2" height="2" fill="#3a2a20"/><rect x="22" y="17" width="2" height="1" fill="#5a1a1c"/><rect x="50" y="7" width="1" height="1" fill="#3a2a20"/><rect x="72" y="8" width="2" height="2" fill="#3a2a20"/><rect x="3" y="13" width="1" height="1" fill="#4a2a28"/><rect x="4" y="10" width="2" height="1" fill="#a07888"/><rect x="55" y="12" width="2" height="2" fill="#0f0c06"/><rect x="74" y="1" width="2" height="2" fill="#6a2020"/><rect x="37" y="18" width="1" height="2" fill="#5a4038"/><rect x="13" y="14" width="2" height="1" fill="#3a2a20"/><rect x="73" y="13" width="1" height="2" fill="#5a4038"/><rect x="9" y="14" width="2" height="2" fill="#6a2020"/><rect x="13" y="19" width="2" height="1" fill="#5a1a1c"/><rect x="7" y="0" width="2" height="2" fill="#141008"/><rect x="20" y="5" width="2" height="2" fill="#9a8a78"/><rect x="75" y="3" width="1" height="2" fill="#1a1208"/><rect x="68" y="8" width="2" height="1" fill="#3a2a20"/><rect x="46" y="0" width="2" height="2" fill="#3a2a20"/><rect x="38" y="5" width="2" height="2" fill="#9a8a78"/><rect x="2" y="17" width="2" height="1" fill="#4a2a28"/><rect x="3" y="15" width="1" height="1" fill="#5a4038"/><rect x="61" y="10" width="1" height="2" fill="#9a8a78"/><rect x="47" y="4" width="1" height="1" fill="#5a1a1c"/><rect x="28" y="8" width="1" height="1" fill="#6a2020"/><rect x="60" y="11" width="1" height="2" fill="#8a7a68"/><rect x="24" y="17" width="2" height="2" fill="#1a1208"/><rect x="51" y="16" width="1" height="1" fill="#1a1208"/><rect x="9" y="2" width="2" height="1" fill="#5a1a1c"/><rect x="66" y="18" width="1" height="1" fill="#3a2a20"/><rect x="23" y="14" width="2" height="2" fill="#4a2a28"/><rect x="41" y="6" width="1" height="1" fill="#a89888"/><rect x="0" y="0" width="2" height="1" fill="#0f0c06"/><rect x="65" y="6" width="1" height="2" fill="#5a4038"/><rect x="71" y="17" width="1" height="2" fill="#5a4038"/><rect x="55" y="19" width="2" height="1" fill="#a89888"/><rect x="25" y="9" width="1" height="1" fill="#6a2020"/><rect x="4" y="14" width="2" height="2" fill="#4a2a28"/><rect x="29" y="13" width="1" height="2" fill="#a07888"/><rect x="46" y="11" width="1" height="2" fill="#6a2020"/><rect x="67" y="13" width="2" height="2" fill="#0f0c06"/><rect x="25" y="14" width="1" height="2" fill="#a89888"/><rect x="19" y="2" width="1" height="1" fill="#4a2a28"/><rect x="1" y="6" width="2" height="2" fill="#a89888"/><rect x="71" y="1" width="2" height="1" fill="#9a8a78"/><rect x="44" y="10" width="2" height="1" fill="#8a7a68"/><rect x="74" y="8" width="2" height="1" fill="#8a7a68"/><rect x="11" y="16" width="2" height="2" fill="#3a2a20"/><rect x="74" y="19" width="2" height="1" fill="#1a1208"/><rect x="26" y="6" width="1" height="2" fill="#5a1a1c"/><rect x="45" y="10" width="2" height="1" fill="#4a2a28"/><rect x="72" y="1" width="2" height="2" fill="#1a1208"/><rect x="67" y="7" width="1" height="1" fill="#0f0c06"/><rect x="22" y="11" width="1" height="2" fill="#a07888"/><rect x="20" y="2" width="2" height="1" fill="#8a7a68"/><rect x="14" y="2" width="2" height="1" fill="#a89888"/><rect x="47" y="14" width="1" height="2" fill="#6a2020"/><rect x="53" y="18" width="2" height="1" fill="#3a2a20"/><rect x="57" y="12" width="2" height="2" fill="#a89888"/><rect x="11" y="13" width="1" height="1" fill="#5a4038"/><rect x="65" y="14" width="2" height="1" fill="#a07888"/><rect x="9" y="3" width="1" height="1" fill="#4a2a28"/><rect x="31" y="17" width="1" height="2" fill="#1a1208"/><rect x="5" y="1" width="2" height="1" fill="#6a2020"/><rect x="56" y="3" width="1" height="2" fill="#4a2a28"/><rect x="0" y="0" width="2" height="1" fill="#9a8a78"/><rect x="18" y="14" width="2" height="1" fill="#6a2020"/><rect x="41" y="6" width="2" height="1" fill="#5a1a1c"/><rect x="6" y="6" width="2" height="2" fill="#0f0c06"/><rect x="72" y="8" width="2" height="1" fill="#4a2a28"/><rect x="39" y="8" width="2" height="2" fill="#6a2020"/><rect x="57" y="11" width="2" height="2" fill="#4a2a28"/><rect x="34" y="2" width="1" height="2" fill="#4a2a28"/><rect x="9" y="3" width="2" height="1" fill="#8a7a68"/><rect x="2" y="13" width="1" height="2" fill="#1a1208"/><rect x="1" y="3" width="1" height="1" fill="#0f0c06"/><rect x="28" y="3" width="1" height="1" fill="#3a2a20"/><rect x="41" y="12" width="1" height="1" fill="#5a1a1c"/><rect x="70" y="5" width="1" height="2" fill="#9a8a78"/><rect x="35" y="1" width="1" height="2" fill="#3a2a20"/><rect x="60" y="18" width="2" height="2" fill="#3a2a20"/><rect x="37" y="4" width="1" height="2" fill="#1a1208"/><rect x="14" y="4" width="1" height="2" fill="#5a4038"/><rect x="45" y="3" width="1" height="2" fill="#141008"/><rect x="52" y="10" width="1" height="2" fill="#141008"/><rect x="32" y="3" width="1" height="1" fill="#9a8a78"/><rect x="42" y="11" width="2" height="1" fill="#5a4038"/><rect x="53" y="8" width="1" height="1" fill="#141008"/><rect x="2" y="1" width="1" height="1" fill="#5a4038"/><rect x="40" y="2" width="1" height="1" fill="#9a8a78"/><rect x="35" y="8" width="1" height="1" fill="#141008"/><rect x="28" y="7" width="2" height="1" fill="#a07888"/><rect x="6" y="2" width="2" height="1" fill="#4a2a28"/><rect x="66" y="12" width="2" height="1" fill="#a89888"/><rect x="42" y="4" width="2" height="2" fill="#a89888"/><rect x="35" y="7" width="1" height="1" fill="#1a1208"/><rect x="3" y="12" width="1" height="2" fill="#a07888"/><rect x="58" y="6" width="2" height="1" fill="#5a1a1c"/><rect x="18" y="6" width="2" height="1" fill="#8a7a68"/><rect x="61" y="18" width="1" height="1" fill="#4a2a28"/><rect x="56" y="14" width="2" height="1" fill="#141008"/><rect x="42" y="0" width="1" height="1" fill="#a89888"/><rect x="59" y="7" width="2" height="2" fill="#5a1a1c"/><rect x="2" y="15" width="2" height="2" fill="#8a7a68"/><rect x="7" y="0" width="1" height="2" fill="#5a1a1c"/><rect x="21" y="6" width="1" height="1" fill="#4a2a28"/><rect x="31" y="2" width="1" height="2" fill="#5a1a1c"/><rect x="13" y="19" width="2" height="1" fill="#9a8a78"/><rect x="30" y="5" width="1" height="2" fill="#141008"/><rect x="32" y="7" width="1" height="2" fill="#3a2a20"/><rect x="27" y="13" width="2" height="1" fill="#1a1208"/><rect x="66" y="3" width="2" height="1" fill="#5a1a1c"/><rect x="13" y="12" width="2" height="1" fill="#3a2a20"/><rect x="68" y="4" width="1" height="2" fill="#0f0c06"/><rect x="3" y="7" width="2" height="1" fill="#1a1208"/><rect x="17" y="9" width="1" height="1" fill="#5a4038"/><rect x="10" y="11" width="2" height="2" fill="#5a1a1c"/><rect x="35" y="13" width="2" height="1" fill="#141008"/><rect x="70" y="10" width="2" height="1" fill="#0f0c06"/><rect x="49" y="19" width="2" height="1" fill="#0f0c06"/><rect x="52" y="0" width="1" height="2" fill="#8a7a68"/><rect x="36" y="0" width="2" height="2" fill="#6a2020"/><rect x="36" y="6" width="2" height="1" fill="#4a2a28"/><rect x="3" y="13" width="2" height="1" fill="#8a7a68"/><rect x="54" y="17" width="2" height="1" fill="#a07888"/><rect x="25" y="6" width="2" height="2" fill="#a89888"/><rect x="18" y="16" width="1" height="1" fill="#3a2a20"/><rect x="17" y="15" width="2" height="1" fill="#5a4038"/><rect x="29" y="15" width="2" height="2" fill="#8a7a68"/><rect x="25" y="1" width="1" height="1" fill="#0f0c06"/><rect x="26" y="5" width="2" height="2" fill="#3a2a20"/><rect x="69" y="15" width="2" height="1" fill="#5a4038"/><rect x="63" y="7" width="2" height="1" fill="#1a1208"/><rect x="6" y="13" width="1" height="1" fill="#6a2020"/><rect x="69" y="7" width="2" height="2" fill="#141008"/><rect x="59" y="14" width="1" height="1" fill="#4a2a28"/><rect x="71" y="1" width="2" height="2" fill="#3a2a20"/><rect x="24" y="9" width="2" height="2" fill="#4a2a28"/><rect x="36" y="9" width="2" height="1" fill="#0f0c06"/><rect x="75" y="7" width="1" height="2" fill="#0f0c06"/><rect x="56" y="10" width="1" height="2" fill="#a07888"/><rect x="36" y="15" width="1" height="1" fill="#a89888"/><rect x="9" y="2" width="1" height="1" fill="#141008"/><rect x="61" y="2" width="2" height="2" fill="#141008"/><rect x="6" y="7" width="1" height="2" fill="#5a4038"/><rect x="6" y="18" width="1" height="2" fill="#1a1208"/><rect x="68" y="16" width="2" height="2" fill="#a07888"/><rect x="50" y="0" width="1" height="2" fill="#a89888"/><rect x="35" y="0" width="1" height="1" fill="#3a2a20"/><rect x="24" y="5" width="1" height="2" fill="#9a8a78"/><rect x="21" y="0" width="1" height="2" fill="#9a8a78"/><rect x="3" y="7" width="2" height="1" fill="#3a2a20"/><rect x="53" y="5" width="1" height="1" fill="#5a4038"/><rect x="73" y="6" width="1" height="1" fill="#6a2020"/><rect x="62" y="3" width="1" height="1" fill="#3a2a20"/><rect x="11" y="16" width="1" height="2" fill="#3a2a20"/><rect x="29" y="8" width="1" height="2" fill="#8a7a68"/><rect x="38" y="15" width="2" height="1" fill="#4a2a28"/><rect x="39" y="10" width="1" height="1" fill="#5a4038"/><rect x="63" y="5" width="1" height="2" fill="#6a2020"/><rect x="55" y="0" width="2" height="1" fill="#a89888"/><rect x="58" y="1" width="2" height="1" fill="#a07888"/><rect x="66" y="15" width="1" height="1" fill="#3a2a20"/><rect x="43" y="14" width="2" height="2" fill="#8a7a68"/><rect x="59" y="14" width="1" height="1" fill="#141008"/><rect x="30" y="13" width="2" height="2" fill="#a89888"/><rect x="24" y="8" width="2" height="2" fill="#8a7a68"/><rect x="60" y="3" width="2" height="2" fill="#4a2a28"/><rect x="60" y="6" width="1" height="1" fill="#8a7a68"/><rect x="38" y="8" width="2" height="1" fill="#5a4038"/><rect x="72" y="12" width="2" height="1" fill="#3a2a20"/><rect x="44" y="11" width="1" height="2" fill="#141008"/><rect x="26" y="15" width="1" height="2" fill="#5a1a1c"/><rect x="52" y="6" width="1" height="1" fill="#4a2a28"/><rect x="2" y="14" width="1" height="1" fill="#a89888"/><rect x="59" y="8" width="1" height="2" fill="#1a1208"/><rect x="21" y="2" width="2" height="1" fill="#a89888"/><rect x="7" y="6" width="2" height="2" fill="#8a7a68"/><rect x="65" y="12" width="2" height="1" fill="#4a2a28"/><rect x="72" y="13" width="1" height="1" fill="#8a7a68"/><rect x="11" y="10" width="1" height="2" fill="#5a4038"/><rect x="23" y="5" width="2" height="1" fill="#5a1a1c"/><rect x="12" y="5" width="2" height="1" fill="#9a8a78"/><rect x="66" y="1" width="1" height="1" fill="#4a2a28"/><rect x="59" y="10" width="2" height="1" fill="#8a7a68"/><rect x="21" y="14" width="2" height="2" fill="#a89888"/><rect x="9" y="10" width="1" height="2" fill="#5a4038"/><rect x="37" y="2" width="2" height="2" fill="#3a2a20"/><rect x="62" y="11" width="2" height="1" fill="#9a8a78"/><rect x="30" y="3" width="1" height="2" fill="#4a2a28"/><rect x="21" y="12" width="2" height="1" fill="#5a4038"/><rect x="54" y="1" width="1" height="1" fill="#5a4038"/><rect x="57" y="10" width="1" height="1" fill="#141008"/><rect x="17" y="1" width="1" height="1" fill="#a89888"/><rect x="0" y="0" width="1" height="2" fill="#5a4038"/><rect x="21" y="18" width="1" height="2" fill="#5a1a1c"/><rect x="63" y="10" width="1" height="1" fill="#141008"/><rect x="31" y="7" width="1" height="2" fill="#5a4038"/><rect x="51" y="14" width="1" height="2" fill="#a89888"/><rect x="44" y="0" width="1" height="1" fill="#141008"/><rect x="56" y="6" width="1" height="2" fill="#0f0c06"/><rect x="44" y="10" width="2" height="2" fill="#3a2a20"/><rect x="31" y="8" width="1" height="1" fill="#5a4038"/><rect x="53" y="15" width="1" height="1" fill="#0f0c06"/><rect x="8" y="0" width="1" height="2" fill="#0f0c06"/><rect x="62" y="9" width="2" height="1" fill="#9a8a78"/><rect x="70" y="4" width="1" height="1" fill="#3a2a20"/><rect x="65" y="5" width="1" height="2" fill="#a89888"/><rect x="20" y="4" width="2" height="2" fill="#6a2020"/><rect x="65" y="17" width="2" height="1" fill="#4a2a28"/><rect x="1" y="16" width="2" height="2" fill="#1a1208"/><rect x="65" y="9" width="2" height="2" fill="#5a1a1c"/><rect x="52" y="2" width="1" height="2" fill="#a07888"/><rect x="19" y="2" width="2" height="2" fill="#a07888"/><rect x="47" y="1" width="1" height="1" fill="#a07888"/><rect x="58" y="0" width="2" height="1" fill="#141008"/><rect x="68" y="8" width="2" height="1" fill="#1a1208"/><rect x="21" y="11" width="1" height="2" fill="#141008"/><rect x="42" y="0" width="1" height="1" fill="#4a2a28"/><rect x="49" y="17" width="1" height="2" fill="#5a4038"/><rect x="24" y="13" width="2" height="1" fill="#5a1a1c"/><rect x="75" y="1" width="1" height="1" fill="#6a2020"/><rect x="10" y="12" width="2" height="2" fill="#8a7a68"/><rect x="11" y="10" width="1" height="2" fill="#5a4038"/><rect x="7" y="8" width="1" height="2" fill="#a89888"/><rect x="17" y="14" width="2" height="2" fill="#6a2020"/><rect x="56" y="14" width="2" height="1" fill="#141008"/><rect x="34" y="5" width="1" height="2" fill="#a89888"/><rect x="70" y="9" width="1" height="2" fill="#3a2a20"/><rect x="9" y="13" width="2" height="2" fill="#9a8a78"/><rect x="18" y="15" width="2" height="2" fill="#141008"/><rect x="13" y="9" width="2" height="1" fill="#0f0c06"/><rect x="38" y="3" width="2" height="1" fill="#3a2a20"/><rect x="6" y="11" width="2" height="2" fill="#5a1a1c"/><rect x="39" y="19" width="1" height="1" fill="#4a2a28"/><rect x="62" y="2" width="2" height="2" fill="#5a4038"/><rect x="71" y="7" width="2" height="2" fill="#a07888"/><rect x="1" y="12" width="1" height="2" fill="#a07888"/><path d="M0 7l6-3 6-3h10l-4 4-8 3-6 4-4 1z" fill="#cfae70"/><path d="M14 1h8l-2 3-6 2z" fill="#e0c488"/><path d="M20 12l6-2 8 1 2 4-8 1-6-1z" fill="#b08c94"/><path d="M26 14l8 1 2 2-8 1z" fill="#d8c078"/><rect x="42" y="3" width="2" height="3" fill="#f4f0e8"/><rect x="61" y="3" width="2" height="2" fill="#f4f0e8"/><path d="M56 14l8-2 6 3-6 3-8-1z" fill="#7a6a5a"/><path d="M36 4l10-2 6 4-8 2z" fill="#241810"/><path d="M44 8l10 1 4 4-10-1z" fill="#1c140c"/><rect x="50" y="1" width="1" height="1" fill="#1a1208"/><rect x="74" y="1" width="1" height="1" fill="#3a1618"/><rect x="55" y="13" width="1" height="1" fill="#1a1208"/><rect x="70" y="13" width="1" height="1" fill="#1a1208"/><rect x="74" y="1" width="1" height="1" fill="#58201c"/><rect x="5" y="17" width="1" height="1" fill="#3a1618"/><rect x="18" y="17" width="1" height="1" fill="#1a1208"/><rect x="13" y="18" width="1" height="1" fill="#3a1618"/><rect x="70" y="2" width="1" height="1" fill="#1a1208"/><rect x="68" y="13" width="1" height="1" fill="#7a6a60"/><rect x="46" y="9" width="1" height="1" fill="#3a1618"/><rect x="10" y="18" width="1" height="1" fill="#7a6a60"/><rect x="57" y="9" width="1" height="1" fill="#1a1208"/><rect x="21" y="10" width="1" height="1" fill="#3a1618"/><rect x="5" y="2" width="1" height="1" fill="#7a6a60"/><rect x="63" y="18" width="1" height="1" fill="#58201c"/><rect x="34" y="15" width="1" height="1" fill="#1a1208"/><rect x="73" y="14" width="1" height="1" fill="#7a6a60"/><rect x="2" y="14" width="1" height="1" fill="#7a6a60"/><rect x="63" y="1" width="1" height="1" fill="#3a1618"/><rect x="31" y="12" width="1" height="1" fill="#58201c"/><rect x="21" y="14" width="1" height="1" fill="#58201c"/><rect x="55" y="17" width="1" height="1" fill="#7a6a60"/><rect x="48" y="7" width="1" height="1" fill="#3a1618"/><rect x="19" y="7" width="1" height="1" fill="#3a1618"/><rect x="75" y="5" width="1" height="1" fill="#7a6a60"/><rect x="18" y="13" width="1" height="1" fill="#7a6a60"/><rect x="65" y="19" width="1" height="1" fill="#1a1208"/><rect x="50" y="12" width="1" height="1" fill="#58201c"/><rect x="51" y="1" width="1" height="1" fill="#3a1618"/><rect x="56" y="5" width="1" height="1" fill="#1a1208"/><rect x="13" y="0" width="1" height="1" fill="#3a1618"/><rect x="3" y="2" width="1" height="1" fill="#3a1618"/><rect x="32" y="11" width="1" height="1" fill="#7a6a60"/><rect x="14" y="15" width="1" height="1" fill="#58201c"/><rect x="39" y="2" width="1" height="1" fill="#3a1618"/><rect x="33" y="15" width="1" height="1" fill="#3a1618"/><rect x="67" y="11" width="1" height="1" fill="#3a1618"/><rect x="11" y="8" width="1" height="1" fill="#7a6a60"/><rect x="28" y="17" width="1" height="1" fill="#7a6a60"/><rect x="30" y="12" width="1" height="1" fill="#3a1618"/><rect x="45" y="0" width="1" height="1" fill="#1a1208"/><rect x="33" y="6" width="1" height="1" fill="#7a6a60"/><rect x="46" y="2" width="1" height="1" fill="#3a1618"/><rect x="60" y="6" width="1" height="1" fill="#7a6a60"/><rect x="0" y="15" width="1" height="1" fill="#7a6a60"/><rect x="49" y="6" width="1" height="1" fill="#58201c"/><rect x="42" y="2" width="1" height="1" fill="#58201c"/><rect x="10" y="5" width="1" height="1" fill="#3a1618"/><rect x="19" y="18" width="1" height="1" fill="#58201c"/><rect x="44" y="4" width="1" height="1" fill="#3a1618"/><rect x="13" y="16" width="1" height="1" fill="#3a1618"/><rect x="27" y="0" width="1" height="1" fill="#7a6a60"/><rect x="64" y="7" width="1" height="1" fill="#7a6a60"/><rect x="16" y="1" width="1" height="1" fill="#7a6a60"/><rect x="64" y="4" width="1" height="1" fill="#3a1618"/><rect x="23" y="19" width="1" height="1" fill="#1a1208"/><rect x="18" y="15" width="1" height="1" fill="#1a1208"/><rect x="66" y="16" width="1" height="1" fill="#58201c"/><rect x="31" y="6" width="1" height="1" fill="#7a6a60"/><rect x="64" y="14" width="1" height="1" fill="#1a1208"/><rect x="41" y="19" width="1" height="1" fill="#3a1618"/><rect x="65" y="17" width="1" height="1" fill="#58201c"/><rect x="71" y="6" width="1" height="1" fill="#58201c"/><rect x="15" y="12" width="1" height="1" fill="#58201c"/><rect x="30" y="13" width="1" height="1" fill="#1a1208"/><rect x="15" y="4" width="1" height="1" fill="#7a6a60"/><rect x="17" y="14" width="1" height="1" fill="#3a1618"/><rect x="62" y="5" width="1" height="1" fill="#3a1618"/><rect x="65" y="12" width="1" height="1" fill="#7a6a60"/></svg>
<div style="left:894px;top:219px;width:72px;height:20px;border:1px solid #809cc8;border-radius:3px;background:linear-gradient(#edf3fc,#e6eefa 48%,#d9e5f6 52%,#e4edfa);"></div>
<span class="lbl" style="left:897.5px;top:222px;width:60px;color:#2a3d9c;">Delete</span>
<div style="left:4px;top:263px;width:964px;height:1px;background:#d0e1f7;"></div>
<div style="left:23px;top:241px;width:1px;height:22px;background:#d6e4f7;"></div>
<div style="left:102px;top:241px;width:1px;height:22px;background:#d6e4f7;"></div>
<div style="left:181px;top:241px;width:1px;height:22px;background:#d6e4f7;"></div>
<div style="left:260px;top:241px;width:1px;height:22px;background:#d6e4f7;"></div>
<div style="left:339px;top:241px;width:1px;height:22px;background:#d6e4f7;"></div>
<div style="left:418px;top:241px;width:1px;height:22px;background:#d6e4f7;"></div>
<div style="left:497px;top:241px;width:1px;height:22px;background:#d6e4f7;"></div>
<div style="left:576px;top:241px;width:1px;height:22px;background:#d6e4f7;"></div>
<div style="left:655px;top:241px;width:1px;height:22px;background:#d6e4f7;"></div>
<div style="left:734px;top:241px;width:1px;height:22px;background:#d6e4f7;"></div>
<div style="left:813px;top:241px;width:1px;height:22px;background:#d6e4f7;"></div>
<div style="left:892px;top:241px;width:1px;height:22px;background:#d6e4f7;"></div>
<div style="left:967px;top:241px;width:1px;height:22px;background:#d6e4f7;"></div>
<div style="left:4px;top:241px;width:1px;height:23px;background:#fff;"></div>
<span class="lbl" style="left:24px;top:245px;width:75px;text-align:right;">7</span>
<span class="lbl" style="left:106px;top:245px;width:75px;text-align:left;">Uncle Bob&#x27;s...</span>
<span class="lbl" style="left:182px;top:245px;width:75px;text-align:right;">3</span>
<span class="lbl" style="left:261px;top:245px;width:75px;text-align:right;">7</span>
<span class="lbl" style="left:343px;top:245px;width:75px;text-align:left;">12 - 1 lb pkgs.</span>
<span class="lbl" style="left:419px;top:245px;width:75px;text-align:right;">30</span>
<span class="lbl" style="left:498px;top:245px;width:75px;text-align:right;">15</span>
<span class="lbl" style="left:577px;top:245px;width:75px;text-align:right;">0</span>
<span class="lbl" style="left:656px;top:245px;width:75px;text-align:right;">10</span>
<div style="left:768px;top:246px;width:13px;height:13px;border:1px solid #1f3f96;background:#fff;"><div style="left:1px;top:1px;width:9px;height:9px;background:linear-gradient(135deg,#dde1e9,#f6f7fa)"></div></div>
<svg style="left:815px;top:242px" width="76" height="20" viewBox="0 0 76 20" preserveAspectRatio="none"><rect width="76" height="20" fill="#8a5420"/><path d="M0 0h2v20H0z" fill="#6a3a18"/><path d="M6 8l10-2 8 2-6 6-10 2z" fill="#8a6a20" opacity="0.7"/><path d="M22 4l6-4v12z" fill="#4a1410"/><path d="M27 0h5l1 10-4 1z" fill="#dcb878"/><path d="M40 0h8l3 8 1 8-6 3-8-2-3-6 2-7z" fill="#f0c070"/><path d="M42 0h4l2 10-3 4-3-6z" fill="#fbd88a"/><path d="M33 11l3 6 6 3h-8z" fill="#3a1a0c"/><path d="M48 0h12l-4 4-4 4z" fill="#4a3010"/><path d="M50 8l4-2 8 10-2 2z" fill="#2a1a0c"/><path d="M54 8l6 2 2 6-6-4z" fill="#d8b070"/><path d="M61 1l8-1 6 8-2 6-6 2-6-2-1-8z" fill="#dcc084"/><path d="M68 0h8v8z" fill="#7a6a58"/><path d="M60 17l16-5v8H60z" fill="#6a3a14"/><path d="M2 17l4-1 2 4H2z" fill="#e8a040"/><path d="M26 19l6-2 2 3z" fill="#e0a040"/><path d="M50 19l4-1 4 2z" fill="#f0c070"/><rect x="14" y="5" width="1" height="2" fill="#7a4a18"/><rect x="6" y="8" width="1" height="1" fill="#7a4a18"/><rect x="16" y="16" width="2" height="1" fill="#a05a20"/><rect x="20" y="7" width="2" height="2" fill="#a05a20"/><rect x="9" y="1" width="1" height="2" fill="#8a6a20"/><rect x="14" y="4" width="2" height="2" fill="#8a6a20"/><rect x="14" y="13" width="1" height="1" fill="#9a6420"/><rect x="9" y="3" width="1" height="2" fill="#a05a20"/><rect x="21" y="3" width="1" height="1" fill="#9a6420"/><rect x="6" y="15" width="2" height="1" fill="#a05a20"/><rect x="15" y="5" width="2" height="2" fill="#7a4a18"/><rect x="24" y="12" width="1" height="2" fill="#a05a20"/><rect x="6" y="12" width="1" height="2" fill="#8a6a20"/><rect x="13" y="8" width="1" height="1" fill="#9a6420"/><rect x="9" y="9" width="2" height="2" fill="#9a6420"/><rect x="14" y="10" width="2" height="2" fill="#a05a20"/><rect x="5" y="6" width="1" height="2" fill="#9a6420"/><rect x="11" y="4" width="1" height="1" fill="#9a6420"/><rect x="7" y="14" width="2" height="2" fill="#7a4a18"/><rect x="20" y="15" width="1" height="2" fill="#a05a20"/><rect x="20" y="3" width="2" height="1" fill="#8a6a20"/><rect x="4" y="4" width="1" height="1" fill="#8a6a20"/><rect x="24" y="5" width="1" height="2" fill="#9a6420"/><rect x="6" y="11" width="1" height="1" fill="#a05a20"/><rect x="13" y="11" width="1" height="2" fill="#8a6a20"/><rect x="8" y="2" width="1" height="2" fill="#9a6420"/><rect x="12" y="14" width="1" height="1" fill="#a05a20"/><rect x="8" y="8" width="1" height="1" fill="#a05a20"/><rect x="14" y="4" width="2" height="1" fill="#9a6420"/><rect x="16" y="17" width="2" height="1" fill="#9a6420"/><rect x="13" y="15" width="2" height="2" fill="#7a4a18"/><rect x="3" y="15" width="1" height="1" fill="#9a6420"/><rect x="25" y="1" width="1" height="1" fill="#9a6420"/><rect x="18" y="3" width="2" height="2" fill="#7a4a18"/><rect x="18" y="13" width="1" height="2" fill="#7a4a18"/><rect x="21" y="10" width="1" height="2" fill="#9a6420"/><rect x="9" y="10" width="2" height="2" fill="#9a6420"/><rect x="12" y="10" width="2" height="2" fill="#8a6a20"/><rect x="8" y="16" width="2" height="1" fill="#8a6a20"/><rect x="8" y="10" width="2" height="2" fill="#a05a20"/></svg>
<div style="left:894px;top:242px;width:72px;height:20px;border:1px solid #809cc8;border-radius:3px;background:linear-gradient(#edf3fc,#e6eefa 48%,#d9e5f6 52%,#e4edfa);"></div>
<span class="lbl" style="left:897.5px;top:245px;width:60px;color:#2a3d9c;">Delete</span>
<div style="left:4px;top:286px;width:964px;height:1px;background:#d0e1f7;"></div>
<div style="left:23px;top:264px;width:1px;height:22px;background:#d6e4f7;"></div>
<div style="left:102px;top:264px;width:1px;height:22px;background:#d6e4f7;"></div>
<div style="left:181px;top:264px;width:1px;height:22px;background:#d6e4f7;"></div>
<div style="left:260px;top:264px;width:1px;height:22px;background:#d6e4f7;"></div>
<div style="left:339px;top:264px;width:1px;height:22px;background:#d6e4f7;"></div>
<div style="left:418px;top:264px;width:1px;height:22px;background:#d6e4f7;"></div>
<div style="left:497px;top:264px;width:1px;height:22px;background:#d6e4f7;"></div>
<div style="left:576px;top:264px;width:1px;height:22px;background:#d6e4f7;"></div>
<div style="left:655px;top:264px;width:1px;height:22px;background:#d6e4f7;"></div>
<div style="left:734px;top:264px;width:1px;height:22px;background:#d6e4f7;"></div>
<div style="left:813px;top:264px;width:1px;height:22px;background:#d6e4f7;"></div>
<div style="left:892px;top:264px;width:1px;height:22px;background:#d6e4f7;"></div>
<div style="left:967px;top:264px;width:1px;height:22px;background:#d6e4f7;"></div>
<div style="left:4px;top:264px;width:1px;height:23px;background:#fff;"></div>
<span class="lbl" style="left:24px;top:268px;width:75px;text-align:right;">8</span>
<span class="lbl" style="left:106px;top:268px;width:75px;text-align:left;">Northwoods...</span>
<span class="lbl" style="left:182px;top:268px;width:75px;text-align:right;">3</span>
<span class="lbl" style="left:261px;top:268px;width:75px;text-align:right;">2</span>
<span class="lbl" style="left:343px;top:268px;width:75px;text-align:left;">12 - 12 oz jars</span>
<span class="lbl" style="left:419px;top:268px;width:75px;text-align:right;">40</span>
<span class="lbl" style="left:498px;top:268px;width:75px;text-align:right;">6</span>
<span class="lbl" style="left:577px;top:268px;width:75px;text-align:right;">0</span>
<span class="lbl" style="left:656px;top:268px;width:75px;text-align:right;">0</span>
<div style="left:768px;top:269px;width:13px;height:13px;border:1px solid #1f3f96;background:#fff;"><div style="left:1px;top:1px;width:9px;height:9px;background:linear-gradient(135deg,#dde1e9,#f6f7fa)"></div></div>
<svg style="left:815px;top:265px" width="76" height="20" viewBox="0 0 76 20" preserveAspectRatio="none"><rect width="76" height="20" fill="#fdfdfd"/><path d="M45 0h31v12c-8-5-18-9-31-12z" fill="#e09a40"/><path d="M64 4l12-2v9z" fill="#eeb468"/><path d="M0 10.500l14-.5 16 1.500 14 4.500 12 4H0z" fill="#e8a030"/><path d="M0 11.800l14-.5 16 1.500 12 4 8 3.200H0z" fill="#8a4a6c"/><path d="M4 17l8-1 10 2 10 0 2 2H2z" fill="#5a2010"/><path d="M8 14l6 .5-4 1z" fill="#b0b8a0"/><path d="M24 17.500l8-1.500 2 1.500z" fill="#a8b098"/><path d="M6 16h8v1H6z" fill="#b06a30"/></svg>
<div style="left:894px;top:265px;width:72px;height:20px;border:1px solid #809cc8;border-radius:3px;background:linear-gradient(#edf3fc,#e6eefa 48%,#d9e5f6 52%,#e4edfa);"></div>
<span class="lbl" style="left:897.5px;top:268px;width:60px;color:#2a3d9c;">Delete</span>
<div style="left:4px;top:309px;width:964px;height:1px;background:#d0e1f7;"></div>
<div style="left:23px;top:287px;width:1px;height:22px;background:#d6e4f7;"></div>
<div style="left:102px;top:287px;width:1px;height:22px;background:#d6e4f7;"></div>
<div style="left:181px;top:287px;width:1px;height:22px;background:#d6e4f7;"></div>
<div style="left:260px;top:287px;width:1px;height:22px;background:#d6e4f7;"></div>
<div style="left:339px;top:287px;width:1px;height:22px;background:#d6e4f7;"></div>
<div style="left:418px;top:287px;width:1px;height:22px;background:#d6e4f7;"></div>
<div style="left:497px;top:287px;width:1px;height:22px;background:#d6e4f7;"></div>
<div style="left:576px;top:287px;width:1px;height:22px;background:#d6e4f7;"></div>
<div style="left:655px;top:287px;width:1px;height:22px;background:#d6e4f7;"></div>
<div style="left:734px;top:287px;width:1px;height:22px;background:#d6e4f7;"></div>
<div style="left:813px;top:287px;width:1px;height:22px;background:#d6e4f7;"></div>
<div style="left:892px;top:287px;width:1px;height:22px;background:#d6e4f7;"></div>
<div style="left:967px;top:287px;width:1px;height:22px;background:#d6e4f7;"></div>
<div style="left:4px;top:287px;width:1px;height:23px;background:#fff;"></div>
<span class="lbl" style="left:24px;top:291px;width:75px;text-align:right;">9</span>
<span class="lbl" style="left:106px;top:291px;width:75px;text-align:left;">Mishi Kobe...</span>
<span class="lbl" style="left:182px;top:291px;width:75px;text-align:right;">4</span>
<span class="lbl" style="left:261px;top:291px;width:75px;text-align:right;">6</span>
<span class="lbl" style="left:343px;top:291px;width:75px;text-align:left;">18 - 500 g p...</span>
<span class="lbl" style="left:419px;top:291px;width:75px;text-align:right;">97</span>
<span class="lbl" style="left:498px;top:291px;width:75px;text-align:right;">29</span>
<span class="lbl" style="left:577px;top:291px;width:75px;text-align:right;">0</span>
<span class="lbl" style="left:656px;top:291px;width:75px;text-align:right;">0</span>
<div style="left:768px;top:292px;width:13px;height:13px;border:1px solid #1f3f96;background:#fff;"><div style="left:1px;top:1px;width:9px;height:9px;background:linear-gradient(135deg,#dde1e9,#f6f7fa)"></div><svg style="left:0;top:0" width="11" height="11" viewBox="0 0 11 11"><path d="M2.6 5.6l2.4 2.4 4-4.6" fill="none" stroke="#3b7030" stroke-width="2.3"/></svg></div>
<svg style="left:815px;top:288px" width="76" height="20" viewBox="0 0 76 20" preserveAspectRatio="none"><rect width="76" height="20" fill="#dc9438"/><path d="M0 0h24l-8 4-16 6z" fill="#f6d8a0"/><path d="M12 5l22-4 12 1-10 6-16 3z" fill="#eab060"/><path d="M30 14l10-6 12-6 4 2-8 6-10 5z" fill="#a07040"/><path d="M44 6l8-5 2 2-6 5z" fill="#4a1010"/><path d="M52 7l4 3-2 1z" fill="#4a1010"/><path d="M27 14l6-4 6 4z" fill="#4a1010"/><path d="M56 12l8-6 8-4h4v12H54z" fill="#f0e0b0"/><path d="M52 0h22l-12 6-6 2z" fill="#d08020"/><rect x="17" y="4" width="2" height="2" fill="#c87818"/><rect x="32" y="9" width="1" height="2" fill="#e8a848"/><rect x="46" y="8" width="2" height="1" fill="#c87818"/><rect x="10" y="4" width="2" height="2" fill="#c87818"/><rect x="8" y="10" width="1" height="1" fill="#e8a848"/><rect x="18" y="5" width="2" height="1" fill="#c87818"/><rect x="49" y="6" width="2" height="1" fill="#c87818"/><rect x="21" y="2" width="2" height="2" fill="#c87818"/><rect x="3" y="8" width="1" height="2" fill="#c07828"/><rect x="15" y="8" width="1" height="1" fill="#e8a848"/><rect x="48" y="11" width="1" height="1" fill="#c87818"/><rect x="0" y="3" width="1" height="2" fill="#c87818"/><rect x="36" y="9" width="1" height="1" fill="#c87818"/><rect x="25" y="5" width="2" height="1" fill="#e8a848"/><rect x="38" y="13" width="1" height="1" fill="#e8a848"/><rect x="35" y="12" width="1" height="2" fill="#c87818"/><rect x="7" y="13" width="2" height="1" fill="#c07828"/><rect x="39" y="10" width="1" height="1" fill="#e8a848"/><rect x="22" y="3" width="2" height="1" fill="#f0c070"/><rect x="25" y="5" width="2" height="1" fill="#e8a848"/><rect x="0" y="8" width="2" height="2" fill="#e8a848"/><rect x="28" y="6" width="1" height="1" fill="#f0c070"/><rect x="40" y="6" width="1" height="2" fill="#e8a848"/><rect x="24" y="10" width="1" height="1" fill="#c07828"/><rect x="45" y="5" width="2" height="2" fill="#e8a848"/><rect x="6" y="8" width="2" height="1" fill="#f0c070"/><rect x="42" y="6" width="2" height="1" fill="#c87818"/><rect x="3" y="4" width="2" height="1" fill="#f0c070"/><rect x="38" y="4" width="1" height="1" fill="#e8a848"/><rect x="28" y="5" width="1" height="1" fill="#c07828"/><rect x="22" y="6" width="2" height="1" fill="#c87818"/><rect x="8" y="3" width="2" height="2" fill="#f0c070"/><rect x="26" y="9" width="1" height="1" fill="#c87818"/><rect x="42" y="13" width="2" height="1" fill="#f0c070"/><rect x="6" y="2" width="2" height="2" fill="#f0c070"/><rect x="51" y="12" width="1" height="1" fill="#e8a848"/><rect x="0" y="5" width="1" height="1" fill="#c87818"/><rect x="37" y="10" width="2" height="2" fill="#c07828"/><rect x="35" y="9" width="1" height="1" fill="#f0c070"/><rect x="37" y="11" width="1" height="1" fill="#c07828"/><rect x="41" y="11" width="2" height="1" fill="#f0c070"/><rect x="46" y="4" width="1" height="1" fill="#e8a848"/><rect x="29" y="2" width="1" height="2" fill="#c07828"/><rect x="23" y="5" width="1" height="1" fill="#c07828"/><rect x="46" y="11" width="1" height="2" fill="#c07828"/><rect x="39" y="11" width="1" height="1" fill="#e8a848"/><rect x="26" y="11" width="1" height="2" fill="#e8a848"/><rect x="2" y="11" width="1" height="1" fill="#c87818"/><rect x="1" y="7" width="1" height="1" fill="#c07828"/><rect x="45" y="3" width="2" height="1" fill="#f0c070"/></svg>
<div style="left:894px;top:288px;width:72px;height:20px;border:1px solid #809cc8;border-radius:3px;background:linear-gradient(#edf3fc,#e6eefa 48%,#d9e5f6 52%,#e4edfa);"></div>
<span class="lbl" style="left:897.5px;top:291px;width:60px;color:#2a3d9c;">Delete</span>
<div style="left:3px;top:302px;width:983px;height:1px;background:#6f9dd9;"></div>
<div style="left:0px;top:303px;width:989px;height:3px;background:#bfdbff;"></div>
<div style="left:968px;top:49px;width:17px;height:253px;background:#cedcf3;"></div>
<svg style="left:973px;top:56px" width="7" height="4" viewBox="0 0 7 4"><path d="M0 4L3.5 0 7 4z" fill="#4b5f80"/></svg>
<svg style="left:973px;top:291px" width="7" height="4" viewBox="0 0 7 4"><path d="M0 0L3.5 4 7 0z" fill="#4b5f80"/></svg>
<div style="left:968px;top:67px;width:17px;height:24px;border:1px solid #7f9dc9;border-radius:2px;background:linear-gradient(90deg,#fff 0,#fff 1px,#eef3fb 1px,#e8effa 50%,#d7e3f5 50%,#dbe6f7);"></div>
<div style="left:972px;top:77px;width:8px;height:1px;background:#7f9dc9;"></div>
<div style="left:972px;top:79px;width:8px;height:1px;background:#7f9dc9;"></div>
<div style="left:972px;top:81px;width:8px;height:1px;background:#7f9dc9;"></div>
</div>
</body></html>
